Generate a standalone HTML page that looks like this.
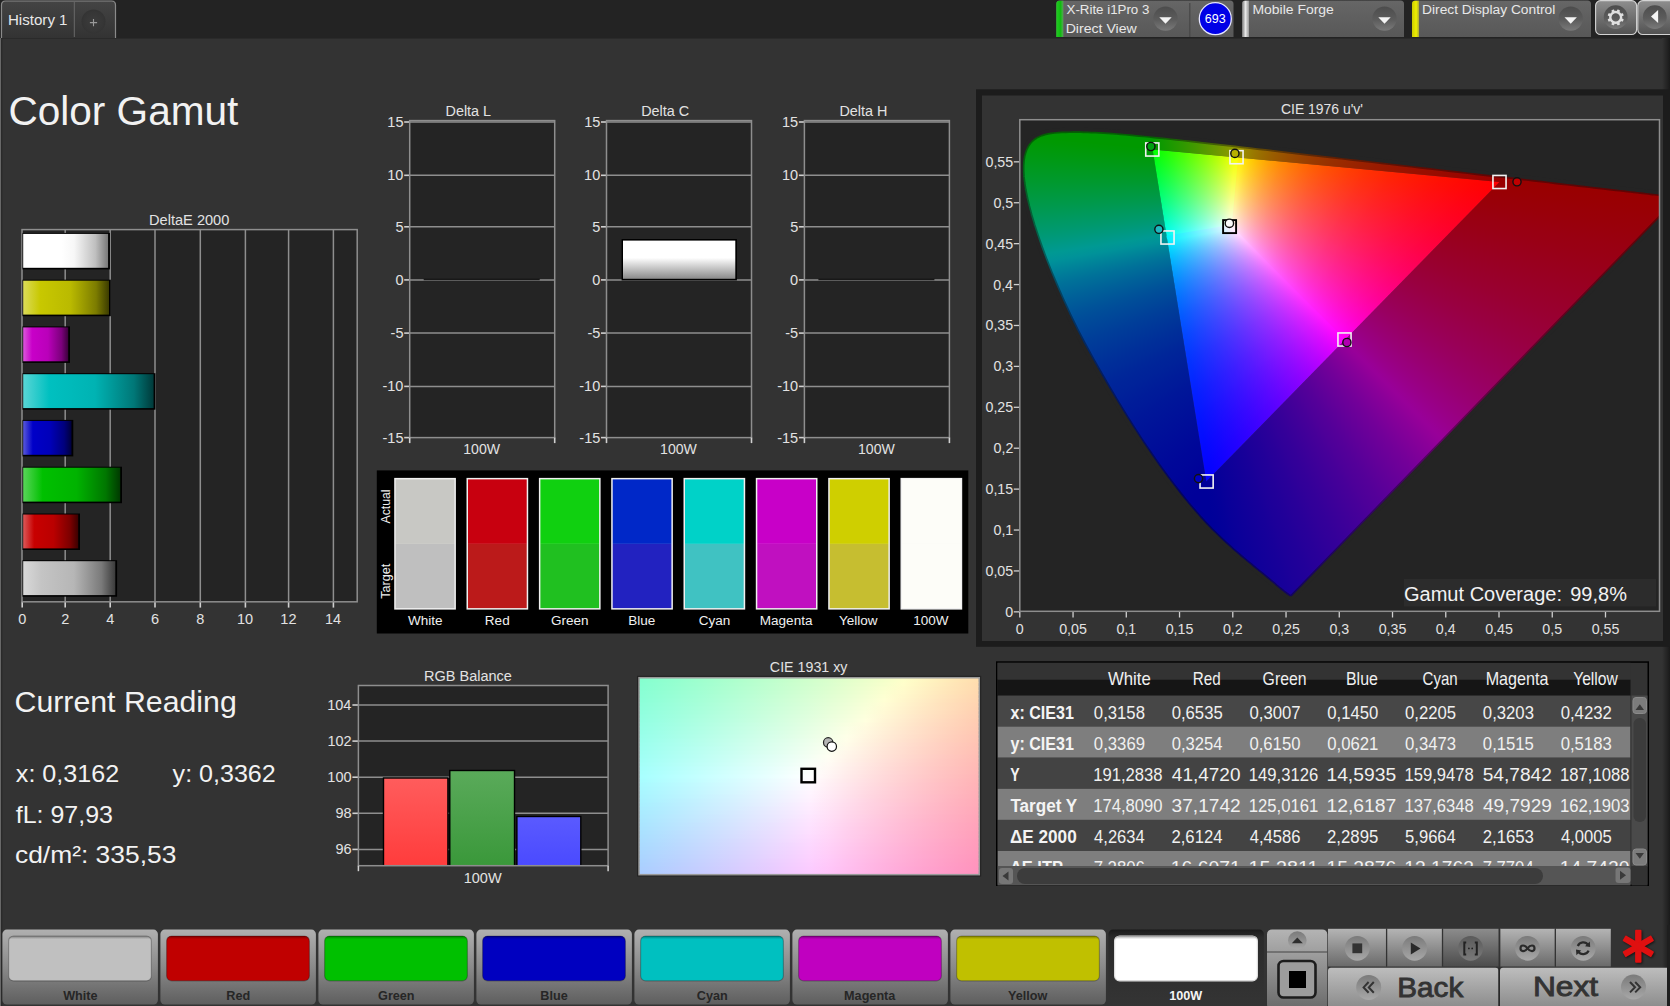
<!DOCTYPE html>
<html><head><meta charset="utf-8"><style>
html,body{margin:0;padding:0;background:#333;}
body{width:1670px;height:1006px;position:relative;overflow:hidden;font-family:"Liberation Sans",sans-serif;}
svg{position:absolute;left:0;top:0;}
svg text{font-family:"Liberation Sans",sans-serif;}
</style></head><body>
<svg width="1670" height="1006" viewBox="0 0 1670 1006">
<rect x="0" y="0" width="1670" height="1006" fill="#333333"/>
<rect x="0" y="0" width="1670" height="38.5" fill="#232323"/>
<rect x="0" y="38" width="1.2" height="968" fill="#686868"/><rect x="1.2" y="38" width="1" height="968" fill="#262626"/>
<defs><linearGradient id="rstrip" x1="0" x2="1" y1="0" y2="0"><stop offset="0" stop-color="#333"/><stop offset="1" stop-color="#1a1a1a"/></linearGradient></defs>
<rect x="1662" y="38" width="8" height="968" fill="url(#rstrip)"/>
<defs><linearGradient id="tabg" x1="0" x2="0" y1="0" y2="1"><stop offset="0" stop-color="#444"/><stop offset="1" stop-color="#333"/></linearGradient><radialGradient id="plusg" cx="0.5" cy="0.5" r="0.5"><stop offset="0" stop-color="#3c3c3c"/><stop offset="0.8" stop-color="#363636"/><stop offset="1" stop-color="#333"/></radialGradient></defs>
<path d="M1.5 38 V5 Q1.5 1 5.5 1 H111.5 Q115.5 1 115.5 5 V38" fill="url(#tabg)" stroke="#8a8a8a" stroke-width="1.2"/>
<line x1="74.3" y1="1.5" x2="74.3" y2="37" stroke="#6a6a6a" stroke-width="1"/>
<text x="7.96" y="25.30" font-size="14.83" textLength="59.58" lengthAdjust="spacingAndGlyphs" fill="#e8e8e8">History 1</text>
<circle cx="93.5" cy="21.5" r="12" fill="url(#plusg)"/>
<path d="M93.5 19 V26.2 M89.9 22.6 H97.1" stroke="#9a9a9a" stroke-width="1.1"/>
<defs><linearGradient id="selg" x1="0" x2="0" y1="0" y2="1"><stop offset="0" stop-color="#666"/><stop offset="1" stop-color="#585858"/></linearGradient><linearGradient id="ddg" x1="0" x2="0" y1="0" y2="1"><stop offset="0" stop-color="#4c4c4c"/><stop offset="0.55" stop-color="#5c5c5c"/><stop offset="1" stop-color="#7a7a7a"/></linearGradient><linearGradient id="greens" x1="0" x2="1"><stop offset="0" stop-color="#2c2"/><stop offset="0.6" stop-color="#1b1"/><stop offset="1" stop-color="#5a5"/></linearGradient><linearGradient id="whites" x1="0" x2="1"><stop offset="0" stop-color="#777"/><stop offset="0.5" stop-color="#e8e8e8"/><stop offset="1" stop-color="#999"/></linearGradient><linearGradient id="yellows" x1="0" x2="1"><stop offset="0" stop-color="#cc0"/><stop offset="0.6" stop-color="#ee0"/><stop offset="1" stop-color="#aa3"/></linearGradient></defs>
<path d="M1056.3 37 V4 Q1056.3 0.5 1059.8 0.5 H1230.0 Q1233.5 0.5 1233.5 4 V37 Z" fill="url(#selg)"/>
<path d="M1056.3 37 V4 Q1056.3 0.8 1059.3 0.8 H1063.3 V37 Z" fill="url(#greens)"/>
<text x="1066.50" y="13.80" font-size="13.52" textLength="82.88" lengthAdjust="spacingAndGlyphs" fill="#e8e8e8">X-Rite i1Pro 3</text>
<text x="1065.65" y="32.60" font-size="13.52" textLength="71.12" lengthAdjust="spacingAndGlyphs" fill="#e8e8e8">Direct View</text>
<circle cx="1165.5" cy="18.6" r="12.2" fill="url(#ddg)"/>
<path d="M1159.3 17.3 L1171.7 17.3 L1165.5 23.8 Z" fill="#f4f4f4"/>
<line x1="1189.8" y1="3" x2="1189.8" y2="37" stroke="#474747" stroke-width="1.2"/>
<circle cx="1215.3" cy="18.7" r="16" fill="#0000e6" stroke="#e6e6ff" stroke-width="1.3"/>
<text x="1204.83" y="23.20" font-size="12.50" fill="#ffffff">693</text>
<path d="M1242.0 37 V4 Q1242.0 0.5 1245.5 0.5 H1400.5 Q1404.0 0.5 1404.0 4 V37 Z" fill="url(#selg)"/>
<path d="M1242.0 37 V4 Q1242.0 0.8 1245.0 0.8 H1249.0 V37 Z" fill="url(#whites)"/>
<text x="1252.46" y="14.00" font-size="13.52" textLength="81.36" lengthAdjust="spacingAndGlyphs" fill="#e8e8e8">Mobile Forge</text>
<circle cx="1384.5" cy="18.6" r="12.2" fill="url(#ddg)"/>
<path d="M1378.3 17.3 L1390.7 17.3 L1384.5 23.8 Z" fill="#f4f4f4"/>
<path d="M1412.0 37 V4 Q1412.0 0.5 1415.5 0.5 H1587.5 Q1591.0 0.5 1591.0 4 V37 Z" fill="url(#selg)"/>
<path d="M1412.0 37 V4 Q1412.0 0.8 1415.0 0.8 H1419.0 V37 Z" fill="url(#yellows)"/>
<text x="1422.07" y="14.00" font-size="13.52" textLength="133.25" lengthAdjust="spacingAndGlyphs" fill="#e8e8e8">Direct Display Control</text>
<circle cx="1570.7" cy="18.6" r="12.2" fill="url(#ddg)"/>
<path d="M1564.5 17.3 L1576.9 17.3 L1570.7 23.8 Z" fill="#f4f4f4"/>
<defs><linearGradient id="btng" x1="0" x2="0" y1="0" y2="1"><stop offset="0" stop-color="#8e8e8e"/><stop offset="1" stop-color="#525252"/></linearGradient></defs>
<rect x="1595.6" y="0.6" width="41" height="33.9" rx="5" fill="url(#btng)" stroke="#d4d4d4" stroke-width="1.1"/>
<rect x="1637.8" y="0.6" width="40" height="33.9" rx="5" fill="url(#btng)" stroke="#d4d4d4" stroke-width="1.1"/>
<circle cx="1615.7" cy="17.2" r="11.9" fill="url(#ddg)"/>
<circle cx="1654.8" cy="17.2" r="11.9" fill="url(#ddg)"/>
<rect x="-1.4" y="-8.2" width="2.8" height="3.6" rx="0.6" transform="translate(1615.7 17.4) rotate(22.5)" fill="#e0e0e0"/><rect x="-1.4" y="-8.2" width="2.8" height="3.6" rx="0.6" transform="translate(1615.7 17.4) rotate(67.5)" fill="#e0e0e0"/><rect x="-1.4" y="-8.2" width="2.8" height="3.6" rx="0.6" transform="translate(1615.7 17.4) rotate(112.5)" fill="#e0e0e0"/><rect x="-1.4" y="-8.2" width="2.8" height="3.6" rx="0.6" transform="translate(1615.7 17.4) rotate(157.5)" fill="#e0e0e0"/><rect x="-1.4" y="-8.2" width="2.8" height="3.6" rx="0.6" transform="translate(1615.7 17.4) rotate(202.5)" fill="#e0e0e0"/><rect x="-1.4" y="-8.2" width="2.8" height="3.6" rx="0.6" transform="translate(1615.7 17.4) rotate(247.5)" fill="#e0e0e0"/><rect x="-1.4" y="-8.2" width="2.8" height="3.6" rx="0.6" transform="translate(1615.7 17.4) rotate(292.5)" fill="#e0e0e0"/><rect x="-1.4" y="-8.2" width="2.8" height="3.6" rx="0.6" transform="translate(1615.7 17.4) rotate(337.5)" fill="#e0e0e0"/>
<circle cx="1615.7" cy="17.4" r="5.4" fill="none" stroke="#e0e0e0" stroke-width="2.4"/>
<path d="M1651 16.6 L1658.1 10 V23 Z" fill="#f4f4f4"/>
<text x="8.44" y="125.10" font-size="40.70" textLength="229.86" lengthAdjust="spacingAndGlyphs" fill="#f2f2f2">Color Gamut</text>
<rect x="22.0" y="229.6" width="335.2" height="372.2" fill="#242424"/>
<line x1="22.20" y1="601.8" x2="22.20" y2="607.6" stroke="#d0d0d0" stroke-width="1.6"/>
<text x="18.16" y="624.20" font-size="14.53" fill="#e2e2e2">0</text>
<line x1="65.20" y1="229.6" x2="65.20" y2="601.8" stroke="#8e8e8e" stroke-width="1.5"/>
<line x1="65.20" y1="601.8" x2="65.20" y2="607.6" stroke="#d0d0d0" stroke-width="1.6"/>
<text x="61.16" y="624.20" font-size="14.53" fill="#e2e2e2">2</text>
<line x1="110.20" y1="229.6" x2="110.20" y2="601.8" stroke="#8e8e8e" stroke-width="1.5"/>
<line x1="110.20" y1="601.8" x2="110.20" y2="607.6" stroke="#d0d0d0" stroke-width="1.6"/>
<text x="106.20" y="624.20" font-size="14.53" fill="#e2e2e2">4</text>
<line x1="155.00" y1="229.6" x2="155.00" y2="601.8" stroke="#8e8e8e" stroke-width="1.5"/>
<line x1="155.00" y1="601.8" x2="155.00" y2="607.6" stroke="#d0d0d0" stroke-width="1.6"/>
<text x="150.91" y="624.20" font-size="14.53" fill="#e2e2e2">6</text>
<line x1="200.30" y1="229.6" x2="200.30" y2="601.8" stroke="#8e8e8e" stroke-width="1.5"/>
<line x1="200.30" y1="601.8" x2="200.30" y2="607.6" stroke="#d0d0d0" stroke-width="1.6"/>
<text x="196.26" y="624.20" font-size="14.53" fill="#e2e2e2">8</text>
<line x1="245.40" y1="229.6" x2="245.40" y2="601.8" stroke="#8e8e8e" stroke-width="1.5"/>
<line x1="245.40" y1="601.8" x2="245.40" y2="607.6" stroke="#d0d0d0" stroke-width="1.6"/>
<text x="237.05" y="624.20" font-size="14.53" fill="#e2e2e2">10</text>
<line x1="288.60" y1="229.6" x2="288.60" y2="601.8" stroke="#8e8e8e" stroke-width="1.5"/>
<line x1="288.60" y1="601.8" x2="288.60" y2="607.6" stroke="#d0d0d0" stroke-width="1.6"/>
<text x="280.33" y="624.20" font-size="14.53" fill="#e2e2e2">12</text>
<line x1="333.40" y1="229.6" x2="333.40" y2="601.8" stroke="#8e8e8e" stroke-width="1.5"/>
<line x1="333.40" y1="601.8" x2="333.40" y2="607.6" stroke="#d0d0d0" stroke-width="1.6"/>
<text x="324.98" y="624.20" font-size="14.53" fill="#e2e2e2">14</text>
<rect x="22.0" y="229.6" width="335.2" height="372.2" fill="none" stroke="#8e8e8e" stroke-width="1.5"/>
<text x="149.00" y="224.80" font-size="14.24" textLength="80.37" lengthAdjust="spacingAndGlyphs" fill="#e2e2e2">DeltaE 2000</text>
<defs><linearGradient id="dbar0" x1="0" x2="1"><stop offset="0.00" stop-color="#ffffff"/><stop offset="0.45" stop-color="#ffffff"/><stop offset="0.60" stop-color="#f7f7f7"/><stop offset="0.85" stop-color="#bfbfbf"/><stop offset="1.00" stop-color="#787878"/></linearGradient><linearGradient id="dbar1" x1="0" x2="1"><stop offset="0.00" stop-color="#dbdb59"/><stop offset="0.20" stop-color="#c8c800"/><stop offset="0.55" stop-color="#baba00"/><stop offset="0.85" stop-color="#7c7c00"/><stop offset="1.00" stop-color="#3c3c00"/></linearGradient><linearGradient id="dbar2" x1="0" x2="1"><stop offset="0.00" stop-color="#db59db"/><stop offset="0.20" stop-color="#c800c8"/><stop offset="0.55" stop-color="#ba00ba"/><stop offset="0.85" stop-color="#7c007c"/><stop offset="1.00" stop-color="#3c003c"/></linearGradient><linearGradient id="dbar3" x1="0" x2="1"><stop offset="0.00" stop-color="#59d6d6"/><stop offset="0.20" stop-color="#00c0c0"/><stop offset="0.55" stop-color="#00b3b3"/><stop offset="0.85" stop-color="#007777"/><stop offset="1.00" stop-color="#003a3a"/></linearGradient><linearGradient id="dbar4" x1="0" x2="1"><stop offset="0.00" stop-color="#5959db"/><stop offset="0.20" stop-color="#0000c8"/><stop offset="0.55" stop-color="#0000ba"/><stop offset="0.85" stop-color="#00007c"/><stop offset="1.00" stop-color="#00003c"/></linearGradient><linearGradient id="dbar5" x1="0" x2="1"><stop offset="0.00" stop-color="#59d659"/><stop offset="0.20" stop-color="#00c000"/><stop offset="0.55" stop-color="#00b300"/><stop offset="0.85" stop-color="#007700"/><stop offset="1.00" stop-color="#003a00"/></linearGradient><linearGradient id="dbar6" x1="0" x2="1"><stop offset="0.00" stop-color="#db5959"/><stop offset="0.20" stop-color="#c80000"/><stop offset="0.55" stop-color="#ba0000"/><stop offset="0.85" stop-color="#7c0000"/><stop offset="1.00" stop-color="#3c0000"/></linearGradient><linearGradient id="dbar7" x1="0" x2="1"><stop offset="0.00" stop-color="#d9d9d9"/><stop offset="0.20" stop-color="#c4c4c4"/><stop offset="0.55" stop-color="#b6b6b6"/><stop offset="0.85" stop-color="#7a7a7a"/><stop offset="1.00" stop-color="#3b3b3b"/></linearGradient></defs>
<rect x="22.5" y="232.9" width="87.4" height="36.5" fill="black"/>
<rect x="23.2" y="233.9" width="84.9" height="33.9" fill="url(#dbar0)"/>
<rect x="22.5" y="279.7" width="88.3" height="36.5" fill="black"/>
<rect x="23.2" y="280.7" width="85.8" height="33.9" fill="url(#dbar1)"/>
<rect x="22.5" y="326.4" width="47.5" height="36.5" fill="black"/>
<rect x="23.2" y="327.4" width="45.0" height="33.9" fill="url(#dbar2)"/>
<rect x="22.5" y="373.2" width="132.9" height="36.5" fill="black"/>
<rect x="23.2" y="374.2" width="130.4" height="33.9" fill="url(#dbar3)"/>
<rect x="22.5" y="419.9" width="50.8" height="36.5" fill="black"/>
<rect x="23.2" y="420.9" width="48.3" height="33.9" fill="url(#dbar4)"/>
<rect x="22.5" y="466.7" width="99.5" height="36.5" fill="black"/>
<rect x="23.2" y="467.7" width="97.0" height="33.9" fill="url(#dbar5)"/>
<rect x="22.5" y="513.5" width="57.5" height="36.5" fill="black"/>
<rect x="23.2" y="514.5" width="55.0" height="33.9" fill="url(#dbar6)"/>
<rect x="22.5" y="560.2" width="94.6" height="36.5" fill="black"/>
<rect x="23.2" y="561.2" width="92.1" height="33.9" fill="url(#dbar7)"/>
<rect x="409.7" y="120.6" width="145" height="317.0" fill="#242424"/>
<line x1="409.7" y1="122.00" x2="554.7" y2="122.00" stroke="#8e8e8e" stroke-width="1.5"/>
<line x1="404.2" y1="122.00" x2="409.7" y2="122.00" stroke="#d0d0d0" stroke-width="1.6"/>
<text x="387.34" y="127.00" font-size="14.53" fill="#e2e2e2">15</text>
<line x1="409.7" y1="175.30" x2="554.7" y2="175.30" stroke="#8e8e8e" stroke-width="1.5"/>
<line x1="404.2" y1="175.30" x2="409.7" y2="175.30" stroke="#d0d0d0" stroke-width="1.6"/>
<text x="387.30" y="180.30" font-size="14.53" fill="#e2e2e2">10</text>
<line x1="409.7" y1="226.80" x2="554.7" y2="226.80" stroke="#8e8e8e" stroke-width="1.5"/>
<line x1="404.2" y1="226.80" x2="409.7" y2="226.80" stroke="#d0d0d0" stroke-width="1.6"/>
<text x="395.43" y="231.80" font-size="14.53" fill="#e2e2e2">5</text>
<line x1="409.7" y1="279.90" x2="554.7" y2="279.90" stroke="#8e8e8e" stroke-width="1.5"/>
<line x1="404.2" y1="279.90" x2="409.7" y2="279.90" stroke="#d0d0d0" stroke-width="1.6"/>
<text x="395.38" y="284.90" font-size="14.53" fill="#e2e2e2">0</text>
<line x1="409.7" y1="333.10" x2="554.7" y2="333.10" stroke="#8e8e8e" stroke-width="1.5"/>
<line x1="404.2" y1="333.10" x2="409.7" y2="333.10" stroke="#d0d0d0" stroke-width="1.6"/>
<text x="390.59" y="338.10" font-size="14.53" fill="#e2e2e2">-5</text>
<line x1="409.7" y1="386.40" x2="554.7" y2="386.40" stroke="#8e8e8e" stroke-width="1.5"/>
<line x1="404.2" y1="386.40" x2="409.7" y2="386.40" stroke="#d0d0d0" stroke-width="1.6"/>
<text x="382.46" y="391.40" font-size="14.53" fill="#e2e2e2">-10</text>
<line x1="404.2" y1="437.60" x2="409.7" y2="437.60" stroke="#d0d0d0" stroke-width="1.6"/>
<text x="382.50" y="442.60" font-size="14.53" fill="#e2e2e2">-15</text>
<rect x="409.7" y="120.6" width="145" height="317.0" fill="none" stroke="#8e8e8e" stroke-width="1.5"/>
<line x1="409.7" y1="437.60" x2="409.7" y2="443.10" stroke="#d0d0d0" stroke-width="1.6"/>
<line x1="554.7" y1="437.60" x2="554.7" y2="443.10" stroke="#d0d0d0" stroke-width="1.6"/>
<text x="445.55" y="116.00" font-size="14.39" fill="#e2e2e2">Delta L</text>
<text x="463.27" y="453.80" font-size="14.10" fill="#e2e2e2">100W</text>
<line x1="423.7" y1="279.35" x2="539.7" y2="279.35" stroke="#181818" stroke-width="1.6"/>
<rect x="606.5" y="120.6" width="145" height="317.0" fill="#242424"/>
<line x1="606.5" y1="122.00" x2="751.5" y2="122.00" stroke="#8e8e8e" stroke-width="1.5"/>
<line x1="601.0" y1="122.00" x2="606.5" y2="122.00" stroke="#d0d0d0" stroke-width="1.6"/>
<text x="584.14" y="127.00" font-size="14.53" fill="#e2e2e2">15</text>
<line x1="606.5" y1="175.30" x2="751.5" y2="175.30" stroke="#8e8e8e" stroke-width="1.5"/>
<line x1="601.0" y1="175.30" x2="606.5" y2="175.30" stroke="#d0d0d0" stroke-width="1.6"/>
<text x="584.10" y="180.30" font-size="14.53" fill="#e2e2e2">10</text>
<line x1="606.5" y1="226.80" x2="751.5" y2="226.80" stroke="#8e8e8e" stroke-width="1.5"/>
<line x1="601.0" y1="226.80" x2="606.5" y2="226.80" stroke="#d0d0d0" stroke-width="1.6"/>
<text x="592.23" y="231.80" font-size="14.53" fill="#e2e2e2">5</text>
<line x1="606.5" y1="279.90" x2="751.5" y2="279.90" stroke="#8e8e8e" stroke-width="1.5"/>
<line x1="601.0" y1="279.90" x2="606.5" y2="279.90" stroke="#d0d0d0" stroke-width="1.6"/>
<text x="592.18" y="284.90" font-size="14.53" fill="#e2e2e2">0</text>
<line x1="606.5" y1="333.10" x2="751.5" y2="333.10" stroke="#8e8e8e" stroke-width="1.5"/>
<line x1="601.0" y1="333.10" x2="606.5" y2="333.10" stroke="#d0d0d0" stroke-width="1.6"/>
<text x="587.39" y="338.10" font-size="14.53" fill="#e2e2e2">-5</text>
<line x1="606.5" y1="386.40" x2="751.5" y2="386.40" stroke="#8e8e8e" stroke-width="1.5"/>
<line x1="601.0" y1="386.40" x2="606.5" y2="386.40" stroke="#d0d0d0" stroke-width="1.6"/>
<text x="579.26" y="391.40" font-size="14.53" fill="#e2e2e2">-10</text>
<line x1="601.0" y1="437.60" x2="606.5" y2="437.60" stroke="#d0d0d0" stroke-width="1.6"/>
<text x="579.30" y="442.60" font-size="14.53" fill="#e2e2e2">-15</text>
<rect x="606.5" y="120.6" width="145" height="317.0" fill="none" stroke="#8e8e8e" stroke-width="1.5"/>
<line x1="606.5" y1="437.60" x2="606.5" y2="443.10" stroke="#d0d0d0" stroke-width="1.6"/>
<line x1="751.5" y1="437.60" x2="751.5" y2="443.10" stroke="#d0d0d0" stroke-width="1.6"/>
<text x="641.19" y="116.00" font-size="14.39" fill="#e2e2e2">Delta C</text>
<text x="660.07" y="453.80" font-size="14.10" fill="#e2e2e2">100W</text>
<rect x="804.4" y="120.6" width="145" height="317.0" fill="#242424"/>
<line x1="804.4" y1="122.00" x2="949.4" y2="122.00" stroke="#8e8e8e" stroke-width="1.5"/>
<line x1="798.9" y1="122.00" x2="804.4" y2="122.00" stroke="#d0d0d0" stroke-width="1.6"/>
<text x="782.04" y="127.00" font-size="14.53" fill="#e2e2e2">15</text>
<line x1="804.4" y1="175.30" x2="949.4" y2="175.30" stroke="#8e8e8e" stroke-width="1.5"/>
<line x1="798.9" y1="175.30" x2="804.4" y2="175.30" stroke="#d0d0d0" stroke-width="1.6"/>
<text x="782.00" y="180.30" font-size="14.53" fill="#e2e2e2">10</text>
<line x1="804.4" y1="226.80" x2="949.4" y2="226.80" stroke="#8e8e8e" stroke-width="1.5"/>
<line x1="798.9" y1="226.80" x2="804.4" y2="226.80" stroke="#d0d0d0" stroke-width="1.6"/>
<text x="790.13" y="231.80" font-size="14.53" fill="#e2e2e2">5</text>
<line x1="804.4" y1="279.90" x2="949.4" y2="279.90" stroke="#8e8e8e" stroke-width="1.5"/>
<line x1="798.9" y1="279.90" x2="804.4" y2="279.90" stroke="#d0d0d0" stroke-width="1.6"/>
<text x="790.08" y="284.90" font-size="14.53" fill="#e2e2e2">0</text>
<line x1="804.4" y1="333.10" x2="949.4" y2="333.10" stroke="#8e8e8e" stroke-width="1.5"/>
<line x1="798.9" y1="333.10" x2="804.4" y2="333.10" stroke="#d0d0d0" stroke-width="1.6"/>
<text x="785.29" y="338.10" font-size="14.53" fill="#e2e2e2">-5</text>
<line x1="804.4" y1="386.40" x2="949.4" y2="386.40" stroke="#8e8e8e" stroke-width="1.5"/>
<line x1="798.9" y1="386.40" x2="804.4" y2="386.40" stroke="#d0d0d0" stroke-width="1.6"/>
<text x="777.16" y="391.40" font-size="14.53" fill="#e2e2e2">-10</text>
<line x1="798.9" y1="437.60" x2="804.4" y2="437.60" stroke="#d0d0d0" stroke-width="1.6"/>
<text x="777.20" y="442.60" font-size="14.53" fill="#e2e2e2">-15</text>
<rect x="804.4" y="120.6" width="145" height="317.0" fill="none" stroke="#8e8e8e" stroke-width="1.5"/>
<line x1="804.4" y1="437.60" x2="804.4" y2="443.10" stroke="#d0d0d0" stroke-width="1.6"/>
<line x1="949.4" y1="437.60" x2="949.4" y2="443.10" stroke="#d0d0d0" stroke-width="1.6"/>
<text x="839.41" y="116.00" font-size="14.39" fill="#e2e2e2">Delta H</text>
<text x="857.97" y="453.80" font-size="14.10" fill="#e2e2e2">100W</text>
<line x1="818.4" y1="279.35" x2="934.4" y2="279.35" stroke="#181818" stroke-width="1.6"/>
<defs><linearGradient id="cbar" x1="0" x2="0" y1="0" y2="1"><stop offset="0" stop-color="#fff"/><stop offset="0.45" stop-color="#fff"/><stop offset="1" stop-color="#8a8a8a"/></linearGradient></defs>
<rect x="621.6" y="239.0" width="115.3" height="41.4" fill="#000"/>
<rect x="623.0" y="240.6" width="112.3" height="38.2" fill="url(#cbar)"/>
<rect x="376.8" y="470.4" width="591.5" height="163.1" fill="#000"/>
<rect x="394.2" y="477.9" width="61.7" height="131.7" fill="#f0f0f0"/>
<rect x="395.7" y="479.4" width="58.7" height="64.5" fill="#c8c8c4"/>
<rect x="395.7" y="543.9" width="58.7" height="64.2" fill="#bfbfbf"/>
<text x="408.04" y="624.60" font-size="13.52" fill="#f0f0f0">White</text>
<rect x="466.5" y="477.9" width="61.7" height="131.7" fill="#f0f0f0"/>
<rect x="468.0" y="479.4" width="58.7" height="64.5" fill="#c8000f"/>
<rect x="468.0" y="543.9" width="58.7" height="64.2" fill="#bb1a1a"/>
<text x="484.86" y="624.60" font-size="13.52" fill="#f0f0f0">Red</text>
<rect x="538.9" y="477.9" width="61.7" height="131.7" fill="#f0f0f0"/>
<rect x="540.4" y="479.4" width="58.7" height="64.5" fill="#10d010"/>
<rect x="540.4" y="543.9" width="58.7" height="64.2" fill="#20c020"/>
<text x="551.02" y="624.60" font-size="13.52" fill="#f0f0f0">Green</text>
<rect x="611.2" y="477.9" width="61.7" height="131.7" fill="#f0f0f0"/>
<rect x="612.7" y="479.4" width="58.7" height="64.5" fill="#0028c8"/>
<rect x="612.7" y="543.9" width="58.7" height="64.2" fill="#2222c0"/>
<text x="628.26" y="624.60" font-size="13.52" fill="#f0f0f0">Blue</text>
<rect x="683.5" y="477.9" width="61.7" height="131.7" fill="#f0f0f0"/>
<rect x="685.0" y="479.4" width="58.7" height="64.5" fill="#00d2c8"/>
<rect x="685.0" y="543.9" width="58.7" height="64.2" fill="#40c2c2"/>
<text x="698.69" y="624.60" font-size="13.52" fill="#f0f0f0">Cyan</text>
<rect x="755.8" y="477.9" width="61.7" height="131.7" fill="#f0f0f0"/>
<rect x="757.3" y="479.4" width="58.7" height="64.5" fill="#c800c8"/>
<rect x="757.3" y="543.9" width="58.7" height="64.2" fill="#c010c0"/>
<text x="759.84" y="624.60" font-size="13.52" fill="#f0f0f0">Magenta</text>
<rect x="828.2" y="477.9" width="61.7" height="131.7" fill="#f0f0f0"/>
<rect x="829.7" y="479.4" width="58.7" height="64.5" fill="#cfcf00"/>
<rect x="829.7" y="543.9" width="58.7" height="64.2" fill="#c6be30"/>
<text x="838.96" y="624.60" font-size="13.52" fill="#f0f0f0">Yellow</text>
<rect x="900.5" y="477.9" width="61.7" height="131.7" fill="#f0f0f0"/>
<rect x="902.0" y="479.4" width="58.7" height="64.5" fill="#fdfdf8"/>
<rect x="902.0" y="543.9" width="58.7" height="64.2" fill="#fdfdf8"/>
<text x="913.21" y="624.60" font-size="13.52" fill="#f0f0f0">100W</text>
<text transform="translate(390.2 506.5) rotate(-90)" font-size="13.2" fill="#f0f0f0" text-anchor="middle" textLength="34" lengthAdjust="spacingAndGlyphs">Actual</text>
<text transform="translate(390.2 581.2) rotate(-90)" font-size="13.2" fill="#f0f0f0" text-anchor="middle" textLength="35" lengthAdjust="spacingAndGlyphs">Target</text>
<rect x="976" y="89.3" width="694" height="557.5" fill="#1c1c1c"/>
<rect x="982" y="95.5" width="681" height="545.5" fill="#333333"/>
<rect x="1019.8" y="119.7" width="639.7" height="491.6" fill="#242424"/>
</svg>
<div style="position:absolute;left:1020px;top:120px;width:640px;height:492px;overflow:hidden;clip-path:path('M273.0 477.5 L273.0 477.5 L272.9 477.5 L272.9 477.5 L272.8 477.5 L272.8 477.5 L272.7 477.6 L272.7 477.7 L272.6 477.8 L272.5 477.8 L272.4 477.8 L272.3 477.7 L272.2 477.8 L272.1 477.8 L272.0 477.9 L271.9 478.0 L271.8 478.0 L271.7 478.0 L271.6 478.0 L271.4 478.0 L271.3 478.0 L271.1 478.0 L271.0 478.0 L270.8 478.0 L270.6 478.0 L270.4 478.0 L270.2 478.1 L270.0 478.1 L269.7 478.0 L269.4 477.9 L269.0 477.8 L268.6 477.5 L268.1 477.2 L267.5 476.9 L266.9 476.5 L266.1 476.0 L265.3 475.4 L264.5 474.8 L263.6 474.1 L262.7 473.4 L261.6 472.5 L260.4 471.6 L259.1 470.5 L257.7 469.4 L256.2 468.2 L254.7 466.8 L253.0 465.4 L251.3 463.9 L249.4 462.4 L247.5 460.7 L245.4 459.0 L243.2 457.2 L240.9 455.3 L238.3 453.1 L235.5 450.9 L232.6 448.5 L229.6 446.0 L226.5 443.4 L223.2 440.7 L219.7 437.8 L216.1 434.7 L212.2 431.3 L208.1 427.7 L203.9 423.8 L199.4 419.6 L194.8 415.2 L190.1 410.5 L185.0 405.3 L179.4 399.2 L173.4 392.3 L166.9 384.7 L160.1 376.3 L152.9 367.2 L145.5 357.3 L137.8 346.7 L129.8 335.4 L121.6 323.4 L113.3 310.6 L104.8 297.0 L96.2 283.0 L87.7 268.8 L79.3 254.3 L70.8 239.5 L62.7 224.5 L55.0 209.9 L47.9 195.3 L41.3 180.8 L35.1 166.7 L29.5 153.2 L24.4 140.4 L19.8 128.0 L15.7 116.4 L12.2 105.5 L9.2 95.5 L6.7 86.3 L4.8 77.9 L3.2 70.0 L2.0 62.9 L1.3 56.5 L1.0 50.7 L1.0 45.3 L1.4 40.4 L2.1 36.0 L3.1 32.0 L4.4 28.4 L6.1 25.1 L8.0 22.3 L10.2 19.8 L12.6 17.6 L15.2 15.8 L18.0 14.3 L21.0 13.1 L24.1 12.1 L27.4 11.3 L30.8 10.8 L34.3 10.4 L37.8 10.1 L41.5 9.8 L45.2 9.7 L49.0 9.6 L52.8 9.6 L56.6 9.5 L60.4 9.6 L64.2 9.6 L68.0 9.7 L71.9 9.9 L75.8 10.0 L79.8 10.3 L83.9 10.5 L88.0 10.7 L92.2 11.0 L96.6 11.4 L101.0 11.7 L105.5 12.1 L110.0 12.5 L114.7 12.9 L119.5 13.4 L124.4 13.9 L129.5 14.4 L134.6 14.9 L139.9 15.5 L145.4 16.0 L151.0 16.6 L156.7 17.2 L162.6 17.9 L168.6 18.6 L174.7 19.2 L181.1 20.0 L187.6 20.7 L194.2 21.4 L201.1 22.2 L208.1 23.0 L215.3 23.8 L222.6 24.7 L230.1 25.5 L237.8 26.4 L245.7 27.3 L253.7 28.2 L262.0 29.2 L270.3 30.2 L278.9 31.1 L287.6 32.2 L296.5 33.2 L305.5 34.2 L314.7 35.3 L324.0 36.3 L333.4 37.4 L343.0 38.5 L352.6 39.6 L362.3 40.7 L372.0 41.9 L381.8 43.0 L391.5 44.1 L401.0 45.2 L410.5 46.3 L419.9 47.4 L429.2 48.5 L438.5 49.5 L447.8 50.6 L457.0 51.7 L465.9 52.7 L474.6 53.7 L483.0 54.6 L491.2 55.6 L499.2 56.5 L506.9 57.4 L514.4 58.2 L521.6 59.1 L528.6 59.9 L535.2 60.7 L541.6 61.4 L547.7 62.1 L553.6 62.8 L559.2 63.4 L564.5 64.0 L569.6 64.6 L574.5 65.2 L579.2 65.7 L583.7 66.2 L588.0 66.7 L592.2 67.2 L596.2 67.7 L600.1 68.1 L603.9 68.6 L607.5 69.0 L610.9 69.4 L614.3 69.8 L617.4 70.1 L620.4 70.5 L623.3 70.8 L626.0 71.1 L628.5 71.4 L630.9 71.7 L633.0 71.9 L634.9 72.1 L636.8 72.4 L639.0 72.6 L641.7 72.9 L644.7 73.3 L647.6 73.6 L650.1 73.9 L651.9 74.1 L653.3 74.3 L654.5 74.4 L655.7 74.5 L656.8 74.7 L657.8 74.8 L658.8 74.9 L659.7 75.0 L660.7 75.1 L661.8 75.2 L662.8 75.3 L663.4 75.4 Z')">
<div style="position:absolute;left:0;top:0;width:640px;height:492px;clip-path:polygon(0.0px 492.0px,0.0px 0.0px,127.9px 0.0px,207.5px 492.0px)">
<div style="position:absolute;left:0;top:0;width:640px;height:492px;background:conic-gradient(from 0deg at 479.5px 62.0px,#000099 0.0deg,#000099 224.0deg,#000199 225.0deg,#000299 226.0deg,#000499 227.0deg,#000699 228.0deg,#000799 229.0deg,#000999 230.0deg,#000b99 231.0deg,#000d99 232.0deg,#000f99 233.0deg,#001199 234.0deg,#001399 235.0deg,#001599 236.0deg,#001799 237.0deg,#001a99 238.0deg,#001c99 239.0deg,#001f99 240.0deg,#002299 241.0deg,#002499 242.0deg,#002799 243.0deg,#002b99 244.0deg,#002e99 245.0deg,#003299 246.0deg,#003699 247.0deg,#003a99 248.0deg,#003e99 249.0deg,#004399 250.0deg,#004899 251.0deg,#004d99 252.0deg,#005399 253.0deg,#005a99 254.0deg,#006199 255.0deg,#006999 256.0deg,#007199 257.0deg,#007b99 258.0deg,#008699 259.0deg,#009299 260.0deg,#009993 261.0deg,#009986 262.0deg,#009979 263.0deg,#00996d 264.0deg,#009962 265.0deg,#009957 266.0deg,#00994c 267.0deg,#009942 268.0deg,#009938 269.0deg,#00992e 270.0deg,#009925 271.0deg,#00991c 272.0deg,#009913 273.0deg,#00990b 274.0deg,#009903 275.0deg,#009900 276.0deg,#009900 360.0deg)"></div>
</div>
<div style="position:absolute;left:0;top:0;width:640px;height:492px;clip-path:polygon(640.0px 0.0px,640.0px 77.0px,0.0px 17.0px,0.0px 0.0px)">
<div style="position:absolute;left:0;top:0;width:640px;height:492px;background:conic-gradient(from 0deg at 186.3px 361.5px,#589900 0.0deg,#639900 1.0deg,#6e9900 2.0deg,#7b9900 3.0deg,#879900 4.0deg,#949900 5.0deg,#999100 6.0deg,#998500 7.0deg,#997a00 8.0deg,#997100 9.0deg,#996900 10.0deg,#996100 11.0deg,#995a00 12.0deg,#995400 13.0deg,#994e00 14.0deg,#994900 15.0deg,#994400 16.0deg,#994000 17.0deg,#993b00 18.0deg,#993700 19.0deg,#993400 20.0deg,#993000 21.0deg,#992d00 22.0deg,#992a00 23.0deg,#992700 24.0deg,#992400 25.0deg,#992100 26.0deg,#991f00 27.0deg,#991c00 28.0deg,#991a00 29.0deg,#991800 30.0deg,#991600 31.0deg,#991400 32.0deg,#991200 33.0deg,#991000 34.0deg,#990e00 35.0deg,#990d00 36.0deg,#990b00 37.0deg,#990900 38.0deg,#990800 39.0deg,#990600 40.0deg,#990500 41.0deg,#990300 42.0deg,#990200 43.0deg,#990100 44.0deg,#990000 45.0deg,#990000 194.0deg,#009900 195.0deg,#009900 350.0deg,#029900 351.0deg,#0a9900 352.0deg,#139900 353.0deg,#1c9900 354.0deg,#259900 355.0deg,#2e9900 356.0deg,#389900 357.0deg,#429900 358.0deg,#4d9900 359.0deg,#589900 360.0deg)"></div>
</div>
<div style="position:absolute;left:0;top:0;width:640px;height:492px;clip-path:polygon(640.0px 492.0px,640.0px 0.0px,540.1px 0.0px,58.6px 492.0px)">
<div style="position:absolute;left:0;top:0;width:640px;height:492px;background:conic-gradient(from 0deg at 132.6px 29.5px,#990000 0.0deg,#990000 95.0deg,#990002 96.0deg,#990004 97.0deg,#990007 98.0deg,#990009 99.0deg,#99000c 100.0deg,#99000f 101.0deg,#990012 102.0deg,#990014 103.0deg,#990017 104.0deg,#99001a 105.0deg,#99001d 106.0deg,#990020 107.0deg,#990023 108.0deg,#990026 109.0deg,#990029 110.0deg,#99002c 111.0deg,#99002f 112.0deg,#990032 113.0deg,#990036 114.0deg,#990039 115.0deg,#99003d 116.0deg,#990040 117.0deg,#990044 118.0deg,#990048 119.0deg,#99004c 120.0deg,#990050 121.0deg,#990054 122.0deg,#990058 123.0deg,#99005d 124.0deg,#990061 125.0deg,#990066 126.0deg,#99006b 127.0deg,#990070 128.0deg,#990075 129.0deg,#99007b 130.0deg,#990080 131.0deg,#990086 132.0deg,#99008c 133.0deg,#990093 134.0deg,#980099 135.0deg,#920099 136.0deg,#8b0099 137.0deg,#850099 138.0deg,#7f0099 139.0deg,#790099 140.0deg,#730099 141.0deg,#6e0099 142.0deg,#690099 143.0deg,#640099 144.0deg,#5f0099 145.0deg,#5a0099 146.0deg,#550099 147.0deg,#510099 148.0deg,#4d0099 149.0deg,#480099 150.0deg,#440099 151.0deg,#400099 152.0deg,#3c0099 153.0deg,#380099 154.0deg,#340099 155.0deg,#310099 156.0deg,#2d0099 157.0deg,#290099 158.0deg,#260099 159.0deg,#220099 160.0deg,#1f0099 161.0deg,#1c0099 162.0deg,#180099 163.0deg,#150099 164.0deg,#120099 165.0deg,#0f0099 166.0deg,#0c0099 167.0deg,#090099 168.0deg,#050099 169.0deg,#020099 170.0deg,#000099 171.0deg,#000099 360.0deg)"></div>
</div>
<div style="position:absolute;left:0;top:0;width:640px;height:492px;clip-path:polygon(479.5px 62.0px,132.6px 29.5px,186.3px 361.5px)">
<div style="position:absolute;left:0;top:0;width:640px;height:492px;clip-path:polygon(482.8px 60.8px,215.3px 35.7px,208.6px 107.3px,324.4px 222.6px);isolation:isolate">
<div style="position:absolute;left:0;top:0;width:640px;height:492px;background:conic-gradient(from 0deg at 186.3px 361.5px,#fff1ff 0.0deg,#fff1ff 6.0deg,#ffddff 7.0deg,#ffccff 8.0deg,#ffbdff 9.0deg,#ffafff 10.0deg,#ffa2ff 11.0deg,#ff97ff 12.0deg,#ff8cff 13.0deg,#ff83ff 14.0deg,#ff7aff 15.0deg,#ff72ff 16.0deg,#ff6aff 17.0deg,#ff63ff 18.0deg,#ff5cff 19.0deg,#ff56ff 20.0deg,#ff50ff 21.0deg,#ff4bff 22.0deg,#ff46ff 23.0deg,#ff41ff 24.0deg,#ff3cff 25.0deg,#ff38ff 26.0deg,#ff33ff 27.0deg,#ff2fff 28.0deg,#ff2cff 29.0deg,#ff28ff 30.0deg,#ff24ff 31.0deg,#ff21ff 32.0deg,#ff1eff 33.0deg,#ff1bff 34.0deg,#ff18ff 35.0deg,#ff15ff 36.0deg,#ff12ff 37.0deg,#ff0fff 38.0deg,#ff0dff 39.0deg,#ff0aff 40.0deg,#ff08ff 41.0deg,#ff05ff 42.0deg,#ff03ff 43.0deg,#ff01ff 44.0deg,#ff01ff 360.0deg)"></div>
<div style="position:absolute;left:0;top:0;width:640px;height:492px;background:conic-gradient(from 0deg at 132.6px 29.5px,#ffff03 0.0deg,#ffff03 96.0deg,#ffff07 97.0deg,#ffff0b 98.0deg,#ffff10 99.0deg,#ffff14 100.0deg,#ffff19 101.0deg,#ffff1d 102.0deg,#ffff22 103.0deg,#ffff26 104.0deg,#ffff2b 105.0deg,#ffff30 106.0deg,#ffff35 107.0deg,#ffff3a 108.0deg,#ffff3f 109.0deg,#ffff44 110.0deg,#ffff49 111.0deg,#ffff4f 112.0deg,#ffff54 113.0deg,#ffff5a 114.0deg,#ffff5f 115.0deg,#ffff65 116.0deg,#ffff6b 117.0deg,#ffff72 118.0deg,#ffff78 119.0deg,#ffff7e 120.0deg,#ffff85 121.0deg,#ffff8c 122.0deg,#ffff93 123.0deg,#ffff9a 124.0deg,#ffffa2 125.0deg,#ffffaa 126.0deg,#ffffb2 127.0deg,#ffffbb 128.0deg,#ffffc3 129.0deg,#ffffcc 130.0deg,#ffffd6 131.0deg,#ffffe0 132.0deg,#ffffea 133.0deg,#fffff5 134.0deg,#fffff5 360.0deg);mix-blend-mode:multiply"></div>
</div>
<div style="position:absolute;left:0;top:0;width:640px;height:492px;clip-path:polygon(130.8px 27.8px,145.6px 119.0px,211.6px 108.0px,218.3px 36.0px);isolation:isolate">
<div style="position:absolute;left:0;top:0;width:640px;height:492px;background:conic-gradient(from 0deg at 186.3px 361.5px,#92ffff 0.0deg,#a5ffff 1.0deg,#b8ffff 2.0deg,#ccffff 3.0deg,#e1ffff 4.0deg,#f7ffff 5.0deg,#f7ffff 178.0deg,#03ffff 179.0deg,#03ffff 351.0deg,#11ffff 352.0deg,#1fffff 353.0deg,#2effff 354.0deg,#3effff 355.0deg,#4dffff 356.0deg,#5effff 357.0deg,#6fffff 358.0deg,#80ffff 359.0deg,#92ffff 360.0deg)"></div>
<div style="position:absolute;left:0;top:0;width:640px;height:492px;background:conic-gradient(from 0deg at 479.5px 62.0px,#fffff5 0.0deg,#fffff5 261.0deg,#ffffdf 262.0deg,#ffffca 263.0deg,#ffffb6 264.0deg,#ffffa3 265.0deg,#ffff90 266.0deg,#ffff7e 267.0deg,#ffff6d 268.0deg,#ffff5d 269.0deg,#ffff4d 270.0deg,#ffff3e 271.0deg,#ffff2f 272.0deg,#ffff20 273.0deg,#ffff12 274.0deg,#ffff05 275.0deg,#ffff05 360.0deg);mix-blend-mode:multiply"></div>
</div>
<div style="position:absolute;left:0;top:0;width:640px;height:492px;clip-path:polygon(185.3px 364.7px,326.5px 220.5px,210.7px 105.1px,145.1px 116.0px);isolation:isolate">
<div style="position:absolute;left:0;top:0;width:640px;height:492px;background:conic-gradient(from 0deg at 132.6px 29.5px,#feffff 0.0deg,#feffff 135.0deg,#f3ffff 136.0deg,#e8ffff 137.0deg,#ddffff 138.0deg,#d3ffff 139.0deg,#caffff 140.0deg,#c0ffff 141.0deg,#b7ffff 142.0deg,#afffff 143.0deg,#a6ffff 144.0deg,#9effff 145.0deg,#96ffff 146.0deg,#8effff 147.0deg,#87ffff 148.0deg,#80ffff 149.0deg,#79ffff 150.0deg,#72ffff 151.0deg,#6bffff 152.0deg,#64ffff 153.0deg,#5effff 154.0deg,#57ffff 155.0deg,#51ffff 156.0deg,#4bffff 157.0deg,#45ffff 158.0deg,#3fffff 159.0deg,#39ffff 160.0deg,#34ffff 161.0deg,#2effff 162.0deg,#29ffff 163.0deg,#23ffff 164.0deg,#1effff 165.0deg,#19ffff 166.0deg,#13ffff 167.0deg,#0effff 168.0deg,#09ffff 169.0deg,#04ffff 170.0deg,#04ffff 360.0deg)"></div>
<div style="position:absolute;left:0;top:0;width:640px;height:492px;background:conic-gradient(from 0deg at 479.5px 62.0px,#ff02ff 0.0deg,#ff02ff 225.0deg,#ff04ff 226.0deg,#ff07ff 227.0deg,#ff09ff 228.0deg,#ff0cff 229.0deg,#ff0fff 230.0deg,#ff12ff 231.0deg,#ff15ff 232.0deg,#ff19ff 233.0deg,#ff1cff 234.0deg,#ff1fff 235.0deg,#ff23ff 236.0deg,#ff27ff 237.0deg,#ff2bff 238.0deg,#ff2fff 239.0deg,#ff33ff 240.0deg,#ff38ff 241.0deg,#ff3dff 242.0deg,#ff42ff 243.0deg,#ff47ff 244.0deg,#ff4dff 245.0deg,#ff53ff 246.0deg,#ff59ff 247.0deg,#ff60ff 248.0deg,#ff68ff 249.0deg,#ff6fff 250.0deg,#ff78ff 251.0deg,#ff81ff 252.0deg,#ff8bff 253.0deg,#ff96ff 254.0deg,#ffa2ff 255.0deg,#ffafff 256.0deg,#ffbdff 257.0deg,#ffcdff 258.0deg,#ffdfff 259.0deg,#fff3ff 260.0deg,#fff3ff 360.0deg);mix-blend-mode:multiply"></div>
</div>
</div>
</div>
<svg width="1670" height="1006" viewBox="0 0 1670 1006">
<text x="1280.94" y="114.20" font-size="13.95" fill="#e2e2e2">CIE 1976 u'v'</text>
<line x1="1013.8" y1="611.85" x2="1019.8" y2="611.85" stroke="#d0d0d0" stroke-width="1.3"/>
<text x="1005.23" y="616.85" font-size="14.24" fill="#e2e2e2">0</text>
<line x1="1019.80" y1="611.3" x2="1019.80" y2="617.5" stroke="#d0d0d0" stroke-width="1.3"/>
<text x="1015.84" y="633.50" font-size="14.24" fill="#e2e2e2">0</text>
<line x1="1013.8" y1="570.94" x2="1019.8" y2="570.94" stroke="#d0d0d0" stroke-width="1.3"/>
<text x="985.47" y="575.94" font-size="14.24" fill="#e2e2e2">0,05</text>
<line x1="1073.05" y1="611.3" x2="1073.05" y2="617.5" stroke="#d0d0d0" stroke-width="1.3"/>
<text x="1059.20" y="633.50" font-size="14.24" fill="#e2e2e2">0,05</text>
<line x1="1013.8" y1="530.03" x2="1019.8" y2="530.03" stroke="#d0d0d0" stroke-width="1.3"/>
<text x="993.49" y="535.03" font-size="14.24" fill="#e2e2e2">0,1</text>
<line x1="1126.29" y1="611.3" x2="1126.29" y2="617.5" stroke="#d0d0d0" stroke-width="1.3"/>
<text x="1116.46" y="633.50" font-size="14.24" fill="#e2e2e2">0,1</text>
<line x1="1013.8" y1="489.12" x2="1019.8" y2="489.12" stroke="#d0d0d0" stroke-width="1.3"/>
<text x="985.47" y="494.12" font-size="14.24" fill="#e2e2e2">0,15</text>
<line x1="1179.54" y1="611.3" x2="1179.54" y2="617.5" stroke="#d0d0d0" stroke-width="1.3"/>
<text x="1165.69" y="633.50" font-size="14.24" fill="#e2e2e2">0,15</text>
<line x1="1013.8" y1="448.21" x2="1019.8" y2="448.21" stroke="#d0d0d0" stroke-width="1.3"/>
<text x="993.52" y="453.21" font-size="14.24" fill="#e2e2e2">0,2</text>
<line x1="1232.78" y1="611.3" x2="1232.78" y2="617.5" stroke="#d0d0d0" stroke-width="1.3"/>
<text x="1222.96" y="633.50" font-size="14.24" fill="#e2e2e2">0,2</text>
<line x1="1013.8" y1="407.30" x2="1019.8" y2="407.30" stroke="#d0d0d0" stroke-width="1.3"/>
<text x="985.47" y="412.30" font-size="14.24" fill="#e2e2e2">0,25</text>
<line x1="1286.03" y1="611.3" x2="1286.03" y2="617.5" stroke="#d0d0d0" stroke-width="1.3"/>
<text x="1272.18" y="633.50" font-size="14.24" fill="#e2e2e2">0,25</text>
<line x1="1013.8" y1="366.39" x2="1019.8" y2="366.39" stroke="#d0d0d0" stroke-width="1.3"/>
<text x="993.42" y="371.39" font-size="14.24" fill="#e2e2e2">0,3</text>
<line x1="1339.27" y1="611.3" x2="1339.27" y2="617.5" stroke="#d0d0d0" stroke-width="1.3"/>
<text x="1329.40" y="633.50" font-size="14.24" fill="#e2e2e2">0,3</text>
<line x1="1013.8" y1="325.48" x2="1019.8" y2="325.48" stroke="#d0d0d0" stroke-width="1.3"/>
<text x="985.47" y="330.48" font-size="14.24" fill="#e2e2e2">0,35</text>
<line x1="1392.52" y1="611.3" x2="1392.52" y2="617.5" stroke="#d0d0d0" stroke-width="1.3"/>
<text x="1378.67" y="633.50" font-size="14.24" fill="#e2e2e2">0,35</text>
<line x1="1013.8" y1="284.57" x2="1019.8" y2="284.57" stroke="#d0d0d0" stroke-width="1.3"/>
<text x="993.22" y="289.57" font-size="14.24" fill="#e2e2e2">0,4</text>
<line x1="1445.76" y1="611.3" x2="1445.76" y2="617.5" stroke="#d0d0d0" stroke-width="1.3"/>
<text x="1435.79" y="633.50" font-size="14.24" fill="#e2e2e2">0,4</text>
<line x1="1013.8" y1="243.66" x2="1019.8" y2="243.66" stroke="#d0d0d0" stroke-width="1.3"/>
<text x="985.47" y="248.66" font-size="14.24" fill="#e2e2e2">0,45</text>
<line x1="1499.01" y1="611.3" x2="1499.01" y2="617.5" stroke="#d0d0d0" stroke-width="1.3"/>
<text x="1485.16" y="633.50" font-size="14.24" fill="#e2e2e2">0,45</text>
<line x1="1013.8" y1="202.75" x2="1019.8" y2="202.75" stroke="#d0d0d0" stroke-width="1.3"/>
<text x="993.40" y="207.75" font-size="14.24" fill="#e2e2e2">0,5</text>
<line x1="1552.25" y1="611.3" x2="1552.25" y2="617.5" stroke="#d0d0d0" stroke-width="1.3"/>
<text x="1542.37" y="633.50" font-size="14.24" fill="#e2e2e2">0,5</text>
<line x1="1013.8" y1="161.84" x2="1019.8" y2="161.84" stroke="#d0d0d0" stroke-width="1.3"/>
<text x="985.47" y="166.84" font-size="14.24" fill="#e2e2e2">0,55</text>
<line x1="1605.49" y1="611.3" x2="1605.49" y2="617.5" stroke="#d0d0d0" stroke-width="1.3"/>
<text x="1591.65" y="633.50" font-size="14.24" fill="#e2e2e2">0,55</text>
<rect x="1404" y="579" width="252" height="27.5" fill="#2d2d2d" opacity="0.95"/>
<text x="1403.99" y="600.70" font-size="19.91" textLength="158.04" lengthAdjust="spacingAndGlyphs" fill="#f2f2f2">Gamut Coverage:</text>
<text x="1570.26" y="600.70" font-size="19.91" textLength="56.65" lengthAdjust="spacingAndGlyphs" fill="#f2f2f2">99,8%</text>
<defs><clipPath id="plotclip"><rect x="1020.5" y="120.5" width="638.5" height="490"/></clipPath></defs>
<defs><clipPath id="hsclip"><path d="M1293.00 597.48 L1292.97 597.48 L1292.92 597.46 L1292.87 597.46 L1292.82 597.48 L1292.77 597.54 L1292.71 597.62 L1292.65 597.70 L1292.58 597.75 L1292.51 597.76 L1292.42 597.75 L1292.33 597.74 L1292.23 597.75 L1292.13 597.81 L1292.04 597.89 L1291.93 597.97 L1291.82 598.02 L1291.70 598.04 L1291.57 598.04 L1291.44 598.03 L1291.29 598.02 L1291.13 598.03 L1290.96 598.03 L1290.77 598.03 L1290.58 598.03 L1290.39 598.05 L1290.19 598.08 L1289.97 598.09 L1289.69 598.03 L1289.37 597.92 L1289.01 597.75 L1288.60 597.53 L1288.10 597.24 L1287.52 596.88 L1286.85 596.45 L1286.13 595.96 L1285.34 595.40 L1284.52 594.79 L1283.64 594.13 L1282.69 593.38 L1281.62 592.53 L1280.42 591.58 L1279.12 590.53 L1277.72 589.39 L1276.23 588.16 L1274.68 586.84 L1273.04 585.44 L1271.30 583.94 L1269.44 582.37 L1267.49 580.73 L1265.43 579.02 L1263.24 577.21 L1260.86 575.25 L1258.29 573.14 L1255.54 570.89 L1252.64 568.52 L1249.60 566.01 L1246.45 563.40 L1243.17 560.69 L1239.71 557.80 L1236.06 554.65 L1232.19 551.28 L1228.14 547.69 L1223.89 543.83 L1219.42 539.61 L1214.82 535.16 L1210.05 530.48 L1204.98 525.27 L1199.45 519.23 L1193.39 512.31 L1186.90 504.67 L1180.06 496.30 L1172.94 487.19 L1165.52 477.31 L1157.76 466.69 L1149.77 455.35 L1141.65 443.37 L1133.32 430.59 L1124.76 417.05 L1116.16 403.03 L1107.70 388.83 L1099.27 374.34 L1090.83 359.47 L1082.66 344.54 L1075.02 329.86 L1067.94 315.33 L1061.30 300.84 L1055.13 286.71 L1049.49 273.24 L1044.38 260.39 L1039.79 248.05 L1035.71 236.36 L1032.16 225.50 L1029.18 215.52 L1026.73 206.32 L1024.77 197.85 L1023.20 190.03 L1022.05 182.91 L1021.34 176.52 L1021.02 170.71 L1021.03 165.33 L1021.38 160.39 L1022.09 155.97 L1023.13 151.98 L1024.44 148.35 L1026.07 145.10 L1028.01 142.25 L1030.20 139.76 L1032.58 137.58 L1035.18 135.76 L1038.00 134.29 L1041.00 133.09 L1044.12 132.08 L1047.37 131.30 L1050.77 130.76 L1054.28 130.37 L1057.85 130.05 L1061.50 129.80 L1065.24 129.66 L1069.03 129.59 L1072.81 129.55 L1076.58 129.54 L1080.36 129.57 L1084.16 129.64 L1088.02 129.74 L1091.91 129.88 L1095.83 130.05 L1099.81 130.25 L1103.87 130.48 L1108.02 130.75 L1112.25 131.04 L1116.56 131.37 L1120.96 131.72 L1125.46 132.10 L1130.04 132.51 L1134.72 132.94 L1139.53 133.40 L1144.45 133.88 L1149.47 134.38 L1154.63 134.91 L1159.93 135.46 L1165.37 136.03 L1170.95 136.63 L1176.68 137.25 L1182.55 137.89 L1188.57 138.56 L1194.74 139.25 L1201.07 139.96 L1207.56 140.69 L1214.24 141.44 L1221.08 142.21 L1228.08 143.01 L1235.26 143.82 L1242.62 144.66 L1250.14 145.53 L1257.83 146.41 L1265.70 147.32 L1273.74 148.24 L1281.96 149.19 L1290.35 150.16 L1298.90 151.15 L1307.61 152.15 L1316.50 153.18 L1325.54 154.22 L1334.70 155.27 L1344.00 156.34 L1353.44 157.42 L1362.99 158.52 L1372.58 159.62 L1382.26 160.74 L1392.04 161.87 L1401.82 163.01 L1411.48 164.13 L1421.02 165.23 L1430.48 166.31 L1439.87 167.39 L1449.20 168.47 L1458.53 169.54 L1467.83 170.61 L1477.00 171.67 L1485.91 172.69 L1494.56 173.68 L1503.00 174.64 L1511.21 175.58 L1519.17 176.49 L1526.89 177.38 L1534.38 178.25 L1541.61 179.08 L1548.56 179.89 L1555.21 180.66 L1561.59 181.40 L1567.71 182.11 L1573.57 182.78 L1579.17 183.42 L1584.50 184.03 L1589.61 184.61 L1594.51 185.18 L1599.22 185.72 L1603.70 186.24 L1608.00 186.73 L1612.18 187.22 L1616.22 187.69 L1620.13 188.14 L1623.88 188.57 L1627.49 188.99 L1630.95 189.39 L1634.26 189.77 L1637.43 190.14 L1640.43 190.48 L1643.28 190.81 L1645.97 191.11 L1648.51 191.39 L1650.90 191.66 L1653.03 191.91 L1654.93 192.13 L1656.85 192.35 L1659.03 192.60 L1661.71 192.91 L1664.71 193.26 L1667.63 193.60 L1670.09 193.88 L1671.91 194.09 L1673.34 194.26 L1674.55 194.40 L1675.71 194.53 L1676.83 194.66 L1677.82 194.78 L1678.75 194.88 L1679.69 194.99 L1680.73 195.11 L1681.80 195.24 L1682.75 195.35 L1683.41 195.42 Z"/></clipPath></defs>
<g clip-path="url(#plotclip)"><g clip-path="url(#hsclip)"><path d="M1293.00 597.48 L1292.97 597.48 L1292.92 597.46 L1292.87 597.46 L1292.82 597.48 L1292.77 597.54 L1292.71 597.62 L1292.65 597.70 L1292.58 597.75 L1292.51 597.76 L1292.42 597.75 L1292.33 597.74 L1292.23 597.75 L1292.13 597.81 L1292.04 597.89 L1291.93 597.97 L1291.82 598.02 L1291.70 598.04 L1291.57 598.04 L1291.44 598.03 L1291.29 598.02 L1291.13 598.03 L1290.96 598.03 L1290.77 598.03 L1290.58 598.03 L1290.39 598.05 L1290.19 598.08 L1289.97 598.09 L1289.69 598.03 L1289.37 597.92 L1289.01 597.75 L1288.60 597.53 L1288.10 597.24 L1287.52 596.88 L1286.85 596.45 L1286.13 595.96 L1285.34 595.40 L1284.52 594.79 L1283.64 594.13 L1282.69 593.38 L1281.62 592.53 L1280.42 591.58 L1279.12 590.53 L1277.72 589.39 L1276.23 588.16 L1274.68 586.84 L1273.04 585.44 L1271.30 583.94 L1269.44 582.37 L1267.49 580.73 L1265.43 579.02 L1263.24 577.21 L1260.86 575.25 L1258.29 573.14 L1255.54 570.89 L1252.64 568.52 L1249.60 566.01 L1246.45 563.40 L1243.17 560.69 L1239.71 557.80 L1236.06 554.65 L1232.19 551.28 L1228.14 547.69 L1223.89 543.83 L1219.42 539.61 L1214.82 535.16 L1210.05 530.48 L1204.98 525.27 L1199.45 519.23 L1193.39 512.31 L1186.90 504.67 L1180.06 496.30 L1172.94 487.19 L1165.52 477.31 L1157.76 466.69 L1149.77 455.35 L1141.65 443.37 L1133.32 430.59 L1124.76 417.05 L1116.16 403.03 L1107.70 388.83 L1099.27 374.34 L1090.83 359.47 L1082.66 344.54 L1075.02 329.86 L1067.94 315.33 L1061.30 300.84 L1055.13 286.71 L1049.49 273.24 L1044.38 260.39 L1039.79 248.05 L1035.71 236.36 L1032.16 225.50 L1029.18 215.52 L1026.73 206.32 L1024.77 197.85 L1023.20 190.03 L1022.05 182.91 L1021.34 176.52 L1021.02 170.71 L1021.03 165.33 L1021.38 160.39 L1022.09 155.97 L1023.13 151.98 L1024.44 148.35 L1026.07 145.10 L1028.01 142.25 L1030.20 139.76 L1032.58 137.58 L1035.18 135.76 L1038.00 134.29 L1041.00 133.09 L1044.12 132.08 L1047.37 131.30 L1050.77 130.76 L1054.28 130.37 L1057.85 130.05 L1061.50 129.80 L1065.24 129.66 L1069.03 129.59 L1072.81 129.55 L1076.58 129.54 L1080.36 129.57 L1084.16 129.64 L1088.02 129.74 L1091.91 129.88 L1095.83 130.05 L1099.81 130.25 L1103.87 130.48 L1108.02 130.75 L1112.25 131.04 L1116.56 131.37 L1120.96 131.72 L1125.46 132.10 L1130.04 132.51 L1134.72 132.94 L1139.53 133.40 L1144.45 133.88 L1149.47 134.38 L1154.63 134.91 L1159.93 135.46 L1165.37 136.03 L1170.95 136.63 L1176.68 137.25 L1182.55 137.89 L1188.57 138.56 L1194.74 139.25 L1201.07 139.96 L1207.56 140.69 L1214.24 141.44 L1221.08 142.21 L1228.08 143.01 L1235.26 143.82 L1242.62 144.66 L1250.14 145.53 L1257.83 146.41 L1265.70 147.32 L1273.74 148.24 L1281.96 149.19 L1290.35 150.16 L1298.90 151.15 L1307.61 152.15 L1316.50 153.18 L1325.54 154.22 L1334.70 155.27 L1344.00 156.34 L1353.44 157.42 L1362.99 158.52 L1372.58 159.62 L1382.26 160.74 L1392.04 161.87 L1401.82 163.01 L1411.48 164.13 L1421.02 165.23 L1430.48 166.31 L1439.87 167.39 L1449.20 168.47 L1458.53 169.54 L1467.83 170.61 L1477.00 171.67 L1485.91 172.69 L1494.56 173.68 L1503.00 174.64 L1511.21 175.58 L1519.17 176.49 L1526.89 177.38 L1534.38 178.25 L1541.61 179.08 L1548.56 179.89 L1555.21 180.66 L1561.59 181.40 L1567.71 182.11 L1573.57 182.78 L1579.17 183.42 L1584.50 184.03 L1589.61 184.61 L1594.51 185.18 L1599.22 185.72 L1603.70 186.24 L1608.00 186.73 L1612.18 187.22 L1616.22 187.69 L1620.13 188.14 L1623.88 188.57 L1627.49 188.99 L1630.95 189.39 L1634.26 189.77 L1637.43 190.14 L1640.43 190.48 L1643.28 190.81 L1645.97 191.11 L1648.51 191.39 L1650.90 191.66 L1653.03 191.91 L1654.93 192.13 L1656.85 192.35 L1659.03 192.60 L1661.71 192.91 L1664.71 193.26 L1667.63 193.60 L1670.09 193.88 L1671.91 194.09 L1673.34 194.26 L1674.55 194.40 L1675.71 194.53 L1676.83 194.66 L1677.82 194.78 L1678.75 194.88 L1679.69 194.99 L1680.73 195.11 L1681.80 195.24 L1682.75 195.35 L1683.41 195.42 Z" fill="none" stroke="rgba(10,10,10,0.4)" stroke-width="7" stroke-linejoin="round"/></g><path d="M1293.00 597.48 L1292.97 597.48 L1292.92 597.46 L1292.87 597.46 L1292.82 597.48 L1292.77 597.54 L1292.71 597.62 L1292.65 597.70 L1292.58 597.75 L1292.51 597.76 L1292.42 597.75 L1292.33 597.74 L1292.23 597.75 L1292.13 597.81 L1292.04 597.89 L1291.93 597.97 L1291.82 598.02 L1291.70 598.04 L1291.57 598.04 L1291.44 598.03 L1291.29 598.02 L1291.13 598.03 L1290.96 598.03 L1290.77 598.03 L1290.58 598.03 L1290.39 598.05 L1290.19 598.08 L1289.97 598.09 L1289.69 598.03 L1289.37 597.92 L1289.01 597.75 L1288.60 597.53 L1288.10 597.24 L1287.52 596.88 L1286.85 596.45 L1286.13 595.96 L1285.34 595.40 L1284.52 594.79 L1283.64 594.13 L1282.69 593.38 L1281.62 592.53 L1280.42 591.58 L1279.12 590.53 L1277.72 589.39 L1276.23 588.16 L1274.68 586.84 L1273.04 585.44 L1271.30 583.94 L1269.44 582.37 L1267.49 580.73 L1265.43 579.02 L1263.24 577.21 L1260.86 575.25 L1258.29 573.14 L1255.54 570.89 L1252.64 568.52 L1249.60 566.01 L1246.45 563.40 L1243.17 560.69 L1239.71 557.80 L1236.06 554.65 L1232.19 551.28 L1228.14 547.69 L1223.89 543.83 L1219.42 539.61 L1214.82 535.16 L1210.05 530.48 L1204.98 525.27 L1199.45 519.23 L1193.39 512.31 L1186.90 504.67 L1180.06 496.30 L1172.94 487.19 L1165.52 477.31 L1157.76 466.69 L1149.77 455.35 L1141.65 443.37 L1133.32 430.59 L1124.76 417.05 L1116.16 403.03 L1107.70 388.83 L1099.27 374.34 L1090.83 359.47 L1082.66 344.54 L1075.02 329.86 L1067.94 315.33 L1061.30 300.84 L1055.13 286.71 L1049.49 273.24 L1044.38 260.39 L1039.79 248.05 L1035.71 236.36 L1032.16 225.50 L1029.18 215.52 L1026.73 206.32 L1024.77 197.85 L1023.20 190.03 L1022.05 182.91 L1021.34 176.52 L1021.02 170.71 L1021.03 165.33 L1021.38 160.39 L1022.09 155.97 L1023.13 151.98 L1024.44 148.35 L1026.07 145.10 L1028.01 142.25 L1030.20 139.76 L1032.58 137.58 L1035.18 135.76 L1038.00 134.29 L1041.00 133.09 L1044.12 132.08 L1047.37 131.30 L1050.77 130.76 L1054.28 130.37 L1057.85 130.05 L1061.50 129.80 L1065.24 129.66 L1069.03 129.59 L1072.81 129.55 L1076.58 129.54 L1080.36 129.57 L1084.16 129.64 L1088.02 129.74 L1091.91 129.88 L1095.83 130.05 L1099.81 130.25 L1103.87 130.48 L1108.02 130.75 L1112.25 131.04 L1116.56 131.37 L1120.96 131.72 L1125.46 132.10 L1130.04 132.51 L1134.72 132.94 L1139.53 133.40 L1144.45 133.88 L1149.47 134.38 L1154.63 134.91 L1159.93 135.46 L1165.37 136.03 L1170.95 136.63 L1176.68 137.25 L1182.55 137.89 L1188.57 138.56 L1194.74 139.25 L1201.07 139.96 L1207.56 140.69 L1214.24 141.44 L1221.08 142.21 L1228.08 143.01 L1235.26 143.82 L1242.62 144.66 L1250.14 145.53 L1257.83 146.41 L1265.70 147.32 L1273.74 148.24 L1281.96 149.19 L1290.35 150.16 L1298.90 151.15 L1307.61 152.15 L1316.50 153.18 L1325.54 154.22 L1334.70 155.27 L1344.00 156.34 L1353.44 157.42 L1362.99 158.52 L1372.58 159.62 L1382.26 160.74 L1392.04 161.87 L1401.82 163.01 L1411.48 164.13 L1421.02 165.23 L1430.48 166.31 L1439.87 167.39 L1449.20 168.47 L1458.53 169.54 L1467.83 170.61 L1477.00 171.67 L1485.91 172.69 L1494.56 173.68 L1503.00 174.64 L1511.21 175.58 L1519.17 176.49 L1526.89 177.38 L1534.38 178.25 L1541.61 179.08 L1548.56 179.89 L1555.21 180.66 L1561.59 181.40 L1567.71 182.11 L1573.57 182.78 L1579.17 183.42 L1584.50 184.03 L1589.61 184.61 L1594.51 185.18 L1599.22 185.72 L1603.70 186.24 L1608.00 186.73 L1612.18 187.22 L1616.22 187.69 L1620.13 188.14 L1623.88 188.57 L1627.49 188.99 L1630.95 189.39 L1634.26 189.77 L1637.43 190.14 L1640.43 190.48 L1643.28 190.81 L1645.97 191.11 L1648.51 191.39 L1650.90 191.66 L1653.03 191.91 L1654.93 192.13 L1656.85 192.35 L1659.03 192.60 L1661.71 192.91 L1664.71 193.26 L1667.63 193.60 L1670.09 193.88 L1671.91 194.09 L1673.34 194.26 L1674.55 194.40 L1675.71 194.53 L1676.83 194.66 L1677.82 194.78 L1678.75 194.88 L1679.69 194.99 L1680.73 195.11 L1681.80 195.24 L1682.75 195.35 L1683.41 195.42 Z" fill="none" stroke="#242424" stroke-width="3.6" stroke-linejoin="round"/></g>
<rect x="1019.8" y="119.7" width="639.7" height="491.6" fill="none" stroke="#8e8e8e" stroke-width="1.5"/>
<rect x="1145.75" y="142.95" width="13.10" height="13.10" fill="none" stroke="#f2f2f2" stroke-width="1.60"/>
<circle cx="1150.90" cy="146.50" r="4.1" fill="#00a010" stroke="#111" stroke-width="1.4"/>
<rect x="1229.95" y="150.65" width="13.10" height="13.10" fill="none" stroke="#f2f2f2" stroke-width="1.60"/>
<circle cx="1234.90" cy="153.40" r="4.1" fill="#b8b000" stroke="#111" stroke-width="1.4"/>
<rect x="1492.95" y="175.45" width="13.10" height="13.10" fill="none" stroke="#f2f2f2" stroke-width="1.60"/>
<circle cx="1517.00" cy="181.80" r="4.1" fill="#c00000" stroke="#111" stroke-width="1.4"/>
<rect x="1160.95" y="230.95" width="13.10" height="13.10" fill="none" stroke="#f2f2f2" stroke-width="1.60"/>
<circle cx="1158.90" cy="229.30" r="4.1" fill="#20b8c0" stroke="#111" stroke-width="1.4"/>
<rect x="1337.95" y="332.95" width="13.10" height="13.10" fill="none" stroke="#f2f2f2" stroke-width="1.60"/>
<circle cx="1346.90" cy="342.50" r="4.1" fill="#b000b0" stroke="#111" stroke-width="1.4"/>
<rect x="1200.05" y="474.95" width="13.10" height="13.10" fill="none" stroke="#f2f2f2" stroke-width="1.60"/>
<circle cx="1198.50" cy="478.60" r="4.1" fill="#0000c0" stroke="#111" stroke-width="1.4"/>
<rect x="1223.10" y="220.10" width="13.00" height="13.00" fill="none" stroke="#000" stroke-width="1.90"/>
<circle cx="1229.4" cy="223.3" r="4.2" fill="#fafafa" stroke="#111" stroke-width="1.4"/>
<text x="14.56" y="712.10" font-size="29.07" textLength="222.19" lengthAdjust="spacingAndGlyphs" fill="#f2f2f2">Current Reading</text>
<text x="15.82" y="782.40" font-size="24.71" textLength="103.45" lengthAdjust="spacingAndGlyphs" fill="#f2f2f2">x: 0,3162</text>
<text x="172.64" y="782.40" font-size="24.71" textLength="103.12" lengthAdjust="spacingAndGlyphs" fill="#f2f2f2">y: 0,3362</text>
<text x="15.75" y="822.70" font-size="24.71" textLength="97.15" lengthAdjust="spacingAndGlyphs" fill="#f2f2f2">fL: 97,93</text>
<text x="14.98" y="863.20" font-size="24.71" textLength="161.38" lengthAdjust="spacingAndGlyphs" fill="#f2f2f2">cd/m²: 335,53</text>
<rect x="358.4" y="685.5" width="249.7" height="180.2" fill="#242424"/>
<line x1="358.4" y1="705.00" x2="608.1" y2="705.00" stroke="#8e8e8e" stroke-width="1.5"/>
<line x1="352.4" y1="705.00" x2="358.4" y2="705.00" stroke="#d0d0d0" stroke-width="1.6"/>
<text x="327.17" y="710.00" font-size="14.53" fill="#e2e2e2">104</text>
<line x1="358.4" y1="741.10" x2="608.1" y2="741.10" stroke="#8e8e8e" stroke-width="1.5"/>
<line x1="352.4" y1="741.10" x2="358.4" y2="741.10" stroke="#d0d0d0" stroke-width="1.6"/>
<text x="327.48" y="746.10" font-size="14.53" fill="#e2e2e2">102</text>
<line x1="358.4" y1="777.20" x2="608.1" y2="777.20" stroke="#8e8e8e" stroke-width="1.5"/>
<line x1="352.4" y1="777.20" x2="358.4" y2="777.20" stroke="#d0d0d0" stroke-width="1.6"/>
<text x="327.32" y="782.20" font-size="14.53" fill="#e2e2e2">100</text>
<line x1="358.4" y1="813.30" x2="608.1" y2="813.30" stroke="#8e8e8e" stroke-width="1.5"/>
<line x1="352.4" y1="813.30" x2="358.4" y2="813.30" stroke="#d0d0d0" stroke-width="1.6"/>
<text x="335.46" y="818.30" font-size="14.53" fill="#e2e2e2">98</text>
<line x1="358.4" y1="849.40" x2="608.1" y2="849.40" stroke="#8e8e8e" stroke-width="1.5"/>
<line x1="352.4" y1="849.40" x2="358.4" y2="849.40" stroke="#d0d0d0" stroke-width="1.6"/>
<text x="335.47" y="854.40" font-size="14.53" fill="#e2e2e2">96</text>
<defs><linearGradient id="rb_r" x1="0" x2="0" y1="0" y2="1"><stop offset="0" stop-color="#ff5c5c"/><stop offset="1" stop-color="#ff3c3c"/></linearGradient><linearGradient id="rb_g" x1="0" x2="0" y1="0" y2="1"><stop offset="0" stop-color="#5aaa5a"/><stop offset="1" stop-color="#3a983a"/></linearGradient><linearGradient id="rb_b" x1="0" x2="0" y1="0" y2="1"><stop offset="0" stop-color="#5a5aff"/><stop offset="1" stop-color="#4a4aff"/></linearGradient></defs>
<rect x="382.8" y="777.3" width="65.8" height="88.4" fill="#000"/>
<rect x="384.2" y="778.7" width="63.0" height="87.0" fill="url(#rb_r)"/>
<rect x="449.1" y="769.8" width="66.1" height="95.9" fill="#000"/>
<rect x="450.5" y="771.2" width="63.3" height="94.5" fill="url(#rb_g)"/>
<rect x="516.2" y="815.8" width="65.3" height="49.9" fill="#000"/>
<rect x="517.6" y="817.2" width="62.5" height="48.5" fill="url(#rb_b)"/>
<rect x="358.4" y="685.5" width="249.7" height="180.2" fill="none" stroke="#8e8e8e" stroke-width="1.5"/>
<line x1="358.4" y1="865.7" x2="358.4" y2="871.2" stroke="#d0d0d0" stroke-width="1.5"/>
<line x1="608.1" y1="865.7" x2="608.1" y2="871.2" stroke="#d0d0d0" stroke-width="1.5"/>
<text x="424.00" y="681.00" font-size="14.53" fill="#e2e2e2">RGB Balance</text>
<text x="463.69" y="882.80" font-size="14.53" fill="#e2e2e2">100W</text>
<text x="769.86" y="672.00" font-size="14.24" fill="#e2e2e2">CIE 1931 xy</text>
<rect x="637.6" y="676.3" width="343.1" height="199.8" fill="none" stroke="#232323" stroke-width="1"/>
<rect x="638.3" y="677" width="341.7" height="198.4" fill="#9a9a9a"/>
<defs><linearGradient id="xy0" x1="0" x2="1"><stop offset="0.000" stop-color="#85ffcf"/><stop offset="0.056" stop-color="#8dffcf"/><stop offset="0.111" stop-color="#94ffcf"/><stop offset="0.167" stop-color="#9dffce"/><stop offset="0.222" stop-color="#a5ffce"/><stop offset="0.278" stop-color="#adffcd"/><stop offset="0.333" stop-color="#b6ffcd"/><stop offset="0.389" stop-color="#beffcd"/><stop offset="0.444" stop-color="#c7ffcc"/><stop offset="0.500" stop-color="#d0ffcc"/><stop offset="0.556" stop-color="#d9ffcc"/><stop offset="0.611" stop-color="#e2ffcb"/><stop offset="0.667" stop-color="#ebffcb"/><stop offset="0.722" stop-color="#f4ffca"/><stop offset="0.778" stop-color="#feffca"/><stop offset="0.833" stop-color="#fff7c3"/><stop offset="0.889" stop-color="#ffeebb"/><stop offset="0.944" stop-color="#ffe5b4"/><stop offset="1.000" stop-color="#ffddae"/></linearGradient><linearGradient id="xy1" x1="0" x2="1"><stop offset="0.000" stop-color="#86ffd1"/><stop offset="0.056" stop-color="#8effd1"/><stop offset="0.111" stop-color="#96ffd0"/><stop offset="0.167" stop-color="#9effd0"/><stop offset="0.222" stop-color="#a6ffd0"/><stop offset="0.278" stop-color="#afffcf"/><stop offset="0.333" stop-color="#b7ffcf"/><stop offset="0.389" stop-color="#c0ffcf"/><stop offset="0.444" stop-color="#c9ffce"/><stop offset="0.500" stop-color="#d1ffce"/><stop offset="0.556" stop-color="#daffce"/><stop offset="0.611" stop-color="#e4ffcd"/><stop offset="0.667" stop-color="#edffcd"/><stop offset="0.722" stop-color="#f6ffcc"/><stop offset="0.778" stop-color="#fffecb"/><stop offset="0.833" stop-color="#fff5c3"/><stop offset="0.889" stop-color="#ffecbc"/><stop offset="0.944" stop-color="#ffe3b5"/><stop offset="1.000" stop-color="#ffdbae"/></linearGradient><linearGradient id="xy2" x1="0" x2="1"><stop offset="0.000" stop-color="#87ffd3"/><stop offset="0.056" stop-color="#8fffd2"/><stop offset="0.111" stop-color="#97ffd2"/><stop offset="0.167" stop-color="#9fffd2"/><stop offset="0.222" stop-color="#a8ffd1"/><stop offset="0.278" stop-color="#b0ffd1"/><stop offset="0.333" stop-color="#b9ffd1"/><stop offset="0.389" stop-color="#c1ffd0"/><stop offset="0.444" stop-color="#caffd0"/><stop offset="0.500" stop-color="#d3ffd0"/><stop offset="0.556" stop-color="#dcffcf"/><stop offset="0.611" stop-color="#e6ffcf"/><stop offset="0.667" stop-color="#efffcf"/><stop offset="0.722" stop-color="#f9ffce"/><stop offset="0.778" stop-color="#fffccb"/><stop offset="0.833" stop-color="#fff3c4"/><stop offset="0.889" stop-color="#ffeabc"/><stop offset="0.944" stop-color="#ffe2b5"/><stop offset="1.000" stop-color="#ffdaaf"/></linearGradient><linearGradient id="xy3" x1="0" x2="1"><stop offset="0.000" stop-color="#89ffd5"/><stop offset="0.056" stop-color="#91ffd4"/><stop offset="0.111" stop-color="#99ffd4"/><stop offset="0.167" stop-color="#a1ffd4"/><stop offset="0.222" stop-color="#a9ffd3"/><stop offset="0.278" stop-color="#b2ffd3"/><stop offset="0.333" stop-color="#baffd3"/><stop offset="0.389" stop-color="#c3ffd2"/><stop offset="0.444" stop-color="#ccffd2"/><stop offset="0.500" stop-color="#d5ffd2"/><stop offset="0.556" stop-color="#deffd1"/><stop offset="0.611" stop-color="#e7ffd1"/><stop offset="0.667" stop-color="#f1ffd1"/><stop offset="0.722" stop-color="#fbffd0"/><stop offset="0.778" stop-color="#fffacc"/><stop offset="0.833" stop-color="#fff1c4"/><stop offset="0.889" stop-color="#ffe8bc"/><stop offset="0.944" stop-color="#ffe0b5"/><stop offset="1.000" stop-color="#ffd8af"/></linearGradient><linearGradient id="xy4" x1="0" x2="1"><stop offset="0.000" stop-color="#8affd6"/><stop offset="0.056" stop-color="#92ffd6"/><stop offset="0.111" stop-color="#9affd6"/><stop offset="0.167" stop-color="#a2ffd6"/><stop offset="0.222" stop-color="#abffd5"/><stop offset="0.278" stop-color="#b3ffd5"/><stop offset="0.333" stop-color="#bcffd5"/><stop offset="0.389" stop-color="#c5ffd4"/><stop offset="0.444" stop-color="#ceffd4"/><stop offset="0.500" stop-color="#d7ffd4"/><stop offset="0.556" stop-color="#e0ffd3"/><stop offset="0.611" stop-color="#e9ffd3"/><stop offset="0.667" stop-color="#f3ffd3"/><stop offset="0.722" stop-color="#fdffd2"/><stop offset="0.778" stop-color="#fff8cc"/><stop offset="0.833" stop-color="#ffefc4"/><stop offset="0.889" stop-color="#ffe6bd"/><stop offset="0.944" stop-color="#ffdeb6"/><stop offset="1.000" stop-color="#ffd6af"/></linearGradient><linearGradient id="xy5" x1="0" x2="1"><stop offset="0.000" stop-color="#8bffd8"/><stop offset="0.056" stop-color="#93ffd8"/><stop offset="0.111" stop-color="#9cffd8"/><stop offset="0.167" stop-color="#a4ffd7"/><stop offset="0.222" stop-color="#acffd7"/><stop offset="0.278" stop-color="#b5ffd7"/><stop offset="0.333" stop-color="#beffd7"/><stop offset="0.389" stop-color="#c7ffd6"/><stop offset="0.444" stop-color="#d0ffd6"/><stop offset="0.500" stop-color="#d9ffd6"/><stop offset="0.556" stop-color="#e2ffd5"/><stop offset="0.611" stop-color="#ebffd5"/><stop offset="0.667" stop-color="#f5ffd5"/><stop offset="0.722" stop-color="#ffffd4"/><stop offset="0.778" stop-color="#fff6cc"/><stop offset="0.833" stop-color="#ffedc5"/><stop offset="0.889" stop-color="#ffe4bd"/><stop offset="0.944" stop-color="#ffdcb6"/><stop offset="1.000" stop-color="#ffd5b0"/></linearGradient><linearGradient id="xy6" x1="0" x2="1"><stop offset="0.000" stop-color="#8dffda"/><stop offset="0.056" stop-color="#95ffda"/><stop offset="0.111" stop-color="#9dffda"/><stop offset="0.167" stop-color="#a5ffd9"/><stop offset="0.222" stop-color="#aeffd9"/><stop offset="0.278" stop-color="#b7ffd9"/><stop offset="0.333" stop-color="#bfffd9"/><stop offset="0.389" stop-color="#c8ffd8"/><stop offset="0.444" stop-color="#d1ffd8"/><stop offset="0.500" stop-color="#daffd8"/><stop offset="0.556" stop-color="#e4ffd7"/><stop offset="0.611" stop-color="#edffd7"/><stop offset="0.667" stop-color="#f7ffd7"/><stop offset="0.722" stop-color="#fffdd5"/><stop offset="0.778" stop-color="#fff4cd"/><stop offset="0.833" stop-color="#ffebc5"/><stop offset="0.889" stop-color="#ffe2bd"/><stop offset="0.944" stop-color="#ffdab7"/><stop offset="1.000" stop-color="#ffd3b0"/></linearGradient><linearGradient id="xy7" x1="0" x2="1"><stop offset="0.000" stop-color="#8effdc"/><stop offset="0.056" stop-color="#96ffdc"/><stop offset="0.111" stop-color="#9effdc"/><stop offset="0.167" stop-color="#a7ffdb"/><stop offset="0.222" stop-color="#afffdb"/><stop offset="0.278" stop-color="#b8ffdb"/><stop offset="0.333" stop-color="#c1ffda"/><stop offset="0.389" stop-color="#caffda"/><stop offset="0.444" stop-color="#d3ffda"/><stop offset="0.500" stop-color="#dcffda"/><stop offset="0.556" stop-color="#e6ffd9"/><stop offset="0.611" stop-color="#efffd9"/><stop offset="0.667" stop-color="#f9ffd9"/><stop offset="0.722" stop-color="#fffbd5"/><stop offset="0.778" stop-color="#fff2cd"/><stop offset="0.833" stop-color="#ffe9c5"/><stop offset="0.889" stop-color="#ffe1be"/><stop offset="0.944" stop-color="#ffd9b7"/><stop offset="1.000" stop-color="#ffd1b0"/></linearGradient><linearGradient id="xy8" x1="0" x2="1"><stop offset="0.000" stop-color="#8fffde"/><stop offset="0.056" stop-color="#98ffde"/><stop offset="0.111" stop-color="#a0ffdd"/><stop offset="0.167" stop-color="#a8ffdd"/><stop offset="0.222" stop-color="#b1ffdd"/><stop offset="0.278" stop-color="#baffdd"/><stop offset="0.333" stop-color="#c3ffdc"/><stop offset="0.389" stop-color="#ccffdc"/><stop offset="0.444" stop-color="#d5ffdc"/><stop offset="0.500" stop-color="#deffdc"/><stop offset="0.556" stop-color="#e8ffdb"/><stop offset="0.611" stop-color="#f1ffdb"/><stop offset="0.667" stop-color="#fbffdb"/><stop offset="0.722" stop-color="#fff9d5"/><stop offset="0.778" stop-color="#fff0cd"/><stop offset="0.833" stop-color="#ffe7c5"/><stop offset="0.889" stop-color="#ffdfbe"/><stop offset="0.944" stop-color="#ffd7b7"/><stop offset="1.000" stop-color="#ffcfb1"/></linearGradient><linearGradient id="xy9" x1="0" x2="1"><stop offset="0.000" stop-color="#91ffe0"/><stop offset="0.056" stop-color="#99ffe0"/><stop offset="0.111" stop-color="#a1ffdf"/><stop offset="0.167" stop-color="#aaffdf"/><stop offset="0.222" stop-color="#b3ffdf"/><stop offset="0.278" stop-color="#bbffdf"/><stop offset="0.333" stop-color="#c4ffde"/><stop offset="0.389" stop-color="#ceffde"/><stop offset="0.444" stop-color="#d7ffde"/><stop offset="0.500" stop-color="#e0ffde"/><stop offset="0.556" stop-color="#eaffdd"/><stop offset="0.611" stop-color="#f3ffdd"/><stop offset="0.667" stop-color="#fdffdd"/><stop offset="0.722" stop-color="#fff7d6"/><stop offset="0.778" stop-color="#ffeece"/><stop offset="0.833" stop-color="#ffe5c6"/><stop offset="0.889" stop-color="#ffddbe"/><stop offset="0.944" stop-color="#ffd5b8"/><stop offset="1.000" stop-color="#ffceb1"/></linearGradient><linearGradient id="xy10" x1="0" x2="1"><stop offset="0.000" stop-color="#92ffe2"/><stop offset="0.056" stop-color="#9affe2"/><stop offset="0.111" stop-color="#a3ffe1"/><stop offset="0.167" stop-color="#acffe1"/><stop offset="0.222" stop-color="#b4ffe1"/><stop offset="0.278" stop-color="#bdffe1"/><stop offset="0.333" stop-color="#c6ffe0"/><stop offset="0.389" stop-color="#cfffe0"/><stop offset="0.444" stop-color="#d9ffe0"/><stop offset="0.500" stop-color="#e2ffe0"/><stop offset="0.556" stop-color="#ecffe0"/><stop offset="0.611" stop-color="#f5ffdf"/><stop offset="0.667" stop-color="#ffffdf"/><stop offset="0.722" stop-color="#fff5d6"/><stop offset="0.778" stop-color="#ffecce"/><stop offset="0.833" stop-color="#ffe3c6"/><stop offset="0.889" stop-color="#ffdbbf"/><stop offset="0.944" stop-color="#ffd3b8"/><stop offset="1.000" stop-color="#ffccb1"/></linearGradient><linearGradient id="xy11" x1="0" x2="1"><stop offset="0.000" stop-color="#94ffe4"/><stop offset="0.056" stop-color="#9cffe4"/><stop offset="0.111" stop-color="#a4ffe3"/><stop offset="0.167" stop-color="#adffe3"/><stop offset="0.222" stop-color="#b6ffe3"/><stop offset="0.278" stop-color="#bfffe3"/><stop offset="0.333" stop-color="#c8ffe3"/><stop offset="0.389" stop-color="#d1ffe2"/><stop offset="0.444" stop-color="#daffe2"/><stop offset="0.500" stop-color="#e4ffe2"/><stop offset="0.556" stop-color="#eeffe2"/><stop offset="0.611" stop-color="#f8ffe1"/><stop offset="0.667" stop-color="#fffcdf"/><stop offset="0.722" stop-color="#fff3d6"/><stop offset="0.778" stop-color="#ffeace"/><stop offset="0.833" stop-color="#ffe1c6"/><stop offset="0.889" stop-color="#ffd9bf"/><stop offset="0.944" stop-color="#ffd2b8"/><stop offset="1.000" stop-color="#ffcab2"/></linearGradient><linearGradient id="xy12" x1="0" x2="1"><stop offset="0.000" stop-color="#95ffe6"/><stop offset="0.056" stop-color="#9dffe6"/><stop offset="0.111" stop-color="#a6ffe5"/><stop offset="0.167" stop-color="#afffe5"/><stop offset="0.222" stop-color="#b8ffe5"/><stop offset="0.278" stop-color="#c1ffe5"/><stop offset="0.333" stop-color="#caffe5"/><stop offset="0.389" stop-color="#d3ffe4"/><stop offset="0.444" stop-color="#dcffe4"/><stop offset="0.500" stop-color="#e6ffe4"/><stop offset="0.556" stop-color="#f0ffe4"/><stop offset="0.611" stop-color="#faffe4"/><stop offset="0.667" stop-color="#fffadf"/><stop offset="0.722" stop-color="#fff1d7"/><stop offset="0.778" stop-color="#ffe8ce"/><stop offset="0.833" stop-color="#ffdfc7"/><stop offset="0.889" stop-color="#ffd7bf"/><stop offset="0.944" stop-color="#ffd0b8"/><stop offset="1.000" stop-color="#ffc9b2"/></linearGradient><linearGradient id="xy13" x1="0" x2="1"><stop offset="0.000" stop-color="#96ffe8"/><stop offset="0.056" stop-color="#9fffe8"/><stop offset="0.111" stop-color="#a8ffe7"/><stop offset="0.167" stop-color="#b0ffe7"/><stop offset="0.222" stop-color="#b9ffe7"/><stop offset="0.278" stop-color="#c2ffe7"/><stop offset="0.333" stop-color="#cbffe7"/><stop offset="0.389" stop-color="#d5ffe7"/><stop offset="0.444" stop-color="#deffe6"/><stop offset="0.500" stop-color="#e8ffe6"/><stop offset="0.556" stop-color="#f2ffe6"/><stop offset="0.611" stop-color="#fcffe6"/><stop offset="0.667" stop-color="#fff8e0"/><stop offset="0.722" stop-color="#ffefd7"/><stop offset="0.778" stop-color="#ffe6cf"/><stop offset="0.833" stop-color="#ffdec7"/><stop offset="0.889" stop-color="#ffd6c0"/><stop offset="0.944" stop-color="#ffceb9"/><stop offset="1.000" stop-color="#ffc7b2"/></linearGradient><linearGradient id="xy14" x1="0" x2="1"><stop offset="0.000" stop-color="#98ffea"/><stop offset="0.056" stop-color="#a0ffea"/><stop offset="0.111" stop-color="#a9ffe9"/><stop offset="0.167" stop-color="#b2ffe9"/><stop offset="0.222" stop-color="#bbffe9"/><stop offset="0.278" stop-color="#c4ffe9"/><stop offset="0.333" stop-color="#cdffe9"/><stop offset="0.389" stop-color="#d7ffe9"/><stop offset="0.444" stop-color="#e0ffe8"/><stop offset="0.500" stop-color="#eaffe8"/><stop offset="0.556" stop-color="#f4ffe8"/><stop offset="0.611" stop-color="#feffe8"/><stop offset="0.667" stop-color="#fff6e0"/><stop offset="0.722" stop-color="#ffedd7"/><stop offset="0.778" stop-color="#ffe4cf"/><stop offset="0.833" stop-color="#ffdcc7"/><stop offset="0.889" stop-color="#ffd4c0"/><stop offset="0.944" stop-color="#ffccb9"/><stop offset="1.000" stop-color="#ffc5b3"/></linearGradient><linearGradient id="xy15" x1="0" x2="1"><stop offset="0.000" stop-color="#99ffec"/><stop offset="0.056" stop-color="#a2ffec"/><stop offset="0.111" stop-color="#abffec"/><stop offset="0.167" stop-color="#b4ffeb"/><stop offset="0.222" stop-color="#bdffeb"/><stop offset="0.278" stop-color="#c6ffeb"/><stop offset="0.333" stop-color="#cfffeb"/><stop offset="0.389" stop-color="#d9ffeb"/><stop offset="0.444" stop-color="#e2ffeb"/><stop offset="0.500" stop-color="#ecffeb"/><stop offset="0.556" stop-color="#f6ffea"/><stop offset="0.611" stop-color="#fffee9"/><stop offset="0.667" stop-color="#fff4e0"/><stop offset="0.722" stop-color="#ffebd7"/><stop offset="0.778" stop-color="#ffe2cf"/><stop offset="0.833" stop-color="#ffdac8"/><stop offset="0.889" stop-color="#ffd2c0"/><stop offset="0.944" stop-color="#ffcbb9"/><stop offset="1.000" stop-color="#ffc4b3"/></linearGradient><linearGradient id="xy16" x1="0" x2="1"><stop offset="0.000" stop-color="#9bffee"/><stop offset="0.056" stop-color="#a4ffee"/><stop offset="0.111" stop-color="#acffee"/><stop offset="0.167" stop-color="#b5ffed"/><stop offset="0.222" stop-color="#beffed"/><stop offset="0.278" stop-color="#c8ffed"/><stop offset="0.333" stop-color="#d1ffed"/><stop offset="0.389" stop-color="#dbffed"/><stop offset="0.444" stop-color="#e4ffed"/><stop offset="0.500" stop-color="#eeffed"/><stop offset="0.556" stop-color="#f8ffed"/><stop offset="0.611" stop-color="#fffce9"/><stop offset="0.667" stop-color="#fff2e0"/><stop offset="0.722" stop-color="#ffe9d8"/><stop offset="0.778" stop-color="#ffe0d0"/><stop offset="0.833" stop-color="#ffd8c8"/><stop offset="0.889" stop-color="#ffd0c1"/><stop offset="0.944" stop-color="#ffc9ba"/><stop offset="1.000" stop-color="#ffc2b3"/></linearGradient><linearGradient id="xy17" x1="0" x2="1"><stop offset="0.000" stop-color="#9cfff0"/><stop offset="0.056" stop-color="#a5fff0"/><stop offset="0.111" stop-color="#aefff0"/><stop offset="0.167" stop-color="#b7fff0"/><stop offset="0.222" stop-color="#c0fff0"/><stop offset="0.278" stop-color="#c9ffef"/><stop offset="0.333" stop-color="#d3ffef"/><stop offset="0.389" stop-color="#dcffef"/><stop offset="0.444" stop-color="#e6ffef"/><stop offset="0.500" stop-color="#f0ffef"/><stop offset="0.556" stop-color="#faffef"/><stop offset="0.611" stop-color="#fffaea"/><stop offset="0.667" stop-color="#fff0e1"/><stop offset="0.722" stop-color="#ffe7d8"/><stop offset="0.778" stop-color="#ffded0"/><stop offset="0.833" stop-color="#ffd6c8"/><stop offset="0.889" stop-color="#ffcfc1"/><stop offset="0.944" stop-color="#ffc7ba"/><stop offset="1.000" stop-color="#ffc1b4"/></linearGradient><linearGradient id="xy18" x1="0" x2="1"><stop offset="0.000" stop-color="#9efff2"/><stop offset="0.056" stop-color="#a7fff2"/><stop offset="0.111" stop-color="#b0fff2"/><stop offset="0.167" stop-color="#b9fff2"/><stop offset="0.222" stop-color="#c2fff2"/><stop offset="0.278" stop-color="#cbfff2"/><stop offset="0.333" stop-color="#d5fff1"/><stop offset="0.389" stop-color="#defff1"/><stop offset="0.444" stop-color="#e8fff1"/><stop offset="0.500" stop-color="#f2fff1"/><stop offset="0.556" stop-color="#fcfff1"/><stop offset="0.611" stop-color="#fff7ea"/><stop offset="0.667" stop-color="#ffeee1"/><stop offset="0.722" stop-color="#ffe5d8"/><stop offset="0.778" stop-color="#ffddd0"/><stop offset="0.833" stop-color="#ffd5c8"/><stop offset="0.889" stop-color="#ffcdc1"/><stop offset="0.944" stop-color="#ffc6ba"/><stop offset="1.000" stop-color="#ffbfb4"/></linearGradient><linearGradient id="xy19" x1="0" x2="1"><stop offset="0.000" stop-color="#9ffff4"/><stop offset="0.056" stop-color="#a8fff4"/><stop offset="0.111" stop-color="#b1fff4"/><stop offset="0.167" stop-color="#bafff4"/><stop offset="0.222" stop-color="#c4fff4"/><stop offset="0.278" stop-color="#cdfff4"/><stop offset="0.333" stop-color="#d7fff4"/><stop offset="0.389" stop-color="#e0fff4"/><stop offset="0.444" stop-color="#eafff4"/><stop offset="0.500" stop-color="#f4fff3"/><stop offset="0.556" stop-color="#fffff3"/><stop offset="0.611" stop-color="#fff5ea"/><stop offset="0.667" stop-color="#ffece1"/><stop offset="0.722" stop-color="#ffe3d8"/><stop offset="0.778" stop-color="#ffdbd0"/><stop offset="0.833" stop-color="#ffd3c9"/><stop offset="0.889" stop-color="#ffcbc2"/><stop offset="0.944" stop-color="#ffc4bb"/><stop offset="1.000" stop-color="#ffbdb4"/></linearGradient><linearGradient id="xy20" x1="0" x2="1"><stop offset="0.000" stop-color="#a1fff6"/><stop offset="0.056" stop-color="#aafff6"/><stop offset="0.111" stop-color="#b3fff6"/><stop offset="0.167" stop-color="#bcfff6"/><stop offset="0.222" stop-color="#c5fff6"/><stop offset="0.278" stop-color="#cffff6"/><stop offset="0.333" stop-color="#d9fff6"/><stop offset="0.389" stop-color="#e2fff6"/><stop offset="0.444" stop-color="#ecfff6"/><stop offset="0.500" stop-color="#f6fff6"/><stop offset="0.556" stop-color="#fffdf4"/><stop offset="0.611" stop-color="#fff3ea"/><stop offset="0.667" stop-color="#ffeae1"/><stop offset="0.722" stop-color="#ffe1d9"/><stop offset="0.778" stop-color="#ffd9d1"/><stop offset="0.833" stop-color="#ffd1c9"/><stop offset="0.889" stop-color="#ffc9c2"/><stop offset="0.944" stop-color="#ffc2bb"/><stop offset="1.000" stop-color="#ffbcb5"/></linearGradient><linearGradient id="xy21" x1="0" x2="1"><stop offset="0.000" stop-color="#a3fff8"/><stop offset="0.056" stop-color="#acfff8"/><stop offset="0.111" stop-color="#b5fff8"/><stop offset="0.167" stop-color="#befff8"/><stop offset="0.222" stop-color="#c7fff8"/><stop offset="0.278" stop-color="#d1fff8"/><stop offset="0.333" stop-color="#dbfff8"/><stop offset="0.389" stop-color="#e4fff8"/><stop offset="0.444" stop-color="#eefff8"/><stop offset="0.500" stop-color="#f9fff8"/><stop offset="0.556" stop-color="#fffbf4"/><stop offset="0.611" stop-color="#fff1eb"/><stop offset="0.667" stop-color="#ffe8e2"/><stop offset="0.722" stop-color="#ffdfd9"/><stop offset="0.778" stop-color="#ffd7d1"/><stop offset="0.833" stop-color="#ffcfc9"/><stop offset="0.889" stop-color="#ffc8c2"/><stop offset="0.944" stop-color="#ffc1bb"/><stop offset="1.000" stop-color="#ffbab5"/></linearGradient><linearGradient id="xy22" x1="0" x2="1"><stop offset="0.000" stop-color="#a4fffb"/><stop offset="0.056" stop-color="#adfffb"/><stop offset="0.111" stop-color="#b6fffb"/><stop offset="0.167" stop-color="#c0fffb"/><stop offset="0.222" stop-color="#c9fffb"/><stop offset="0.278" stop-color="#d3fffb"/><stop offset="0.333" stop-color="#dcfffb"/><stop offset="0.389" stop-color="#e6fffb"/><stop offset="0.444" stop-color="#f1fffb"/><stop offset="0.500" stop-color="#fbfffa"/><stop offset="0.556" stop-color="#fff9f4"/><stop offset="0.611" stop-color="#ffefeb"/><stop offset="0.667" stop-color="#ffe6e2"/><stop offset="0.722" stop-color="#ffddd9"/><stop offset="0.778" stop-color="#ffd5d1"/><stop offset="0.833" stop-color="#ffcdca"/><stop offset="0.889" stop-color="#ffc6c2"/><stop offset="0.944" stop-color="#ffbfbc"/><stop offset="1.000" stop-color="#ffb9b5"/></linearGradient><linearGradient id="xy23" x1="0" x2="1"><stop offset="0.000" stop-color="#a6fffd"/><stop offset="0.056" stop-color="#affffd"/><stop offset="0.111" stop-color="#b8fffd"/><stop offset="0.167" stop-color="#c1fffd"/><stop offset="0.222" stop-color="#cbfffd"/><stop offset="0.278" stop-color="#d5fffd"/><stop offset="0.333" stop-color="#defffd"/><stop offset="0.389" stop-color="#e8fffd"/><stop offset="0.444" stop-color="#f3fffd"/><stop offset="0.500" stop-color="#fdfffd"/><stop offset="0.556" stop-color="#fff7f5"/><stop offset="0.611" stop-color="#ffedeb"/><stop offset="0.667" stop-color="#ffe4e2"/><stop offset="0.722" stop-color="#ffdbda"/><stop offset="0.778" stop-color="#ffd3d2"/><stop offset="0.833" stop-color="#ffccca"/><stop offset="0.889" stop-color="#ffc4c3"/><stop offset="0.944" stop-color="#ffbebc"/><stop offset="1.000" stop-color="#ffb7b6"/></linearGradient><linearGradient id="xy24" x1="0" x2="1"><stop offset="0.000" stop-color="#a7ffff"/><stop offset="0.056" stop-color="#b0ffff"/><stop offset="0.111" stop-color="#baffff"/><stop offset="0.167" stop-color="#c3ffff"/><stop offset="0.222" stop-color="#cdffff"/><stop offset="0.278" stop-color="#d6ffff"/><stop offset="0.333" stop-color="#e0ffff"/><stop offset="0.389" stop-color="#eaffff"/><stop offset="0.444" stop-color="#f5ffff"/><stop offset="0.500" stop-color="#ffffff"/><stop offset="0.556" stop-color="#fff5f5"/><stop offset="0.611" stop-color="#ffebeb"/><stop offset="0.667" stop-color="#ffe2e2"/><stop offset="0.722" stop-color="#ffd9da"/><stop offset="0.778" stop-color="#ffd1d2"/><stop offset="0.833" stop-color="#ffcaca"/><stop offset="0.889" stop-color="#ffc3c3"/><stop offset="0.944" stop-color="#ffbcbc"/><stop offset="1.000" stop-color="#ffb5b6"/></linearGradient><linearGradient id="xy25" x1="0" x2="1"><stop offset="0.000" stop-color="#a7fdff"/><stop offset="0.056" stop-color="#b1fdff"/><stop offset="0.111" stop-color="#bafdff"/><stop offset="0.167" stop-color="#c3fdff"/><stop offset="0.222" stop-color="#cdfdff"/><stop offset="0.278" stop-color="#d6fcff"/><stop offset="0.333" stop-color="#e0fcff"/><stop offset="0.389" stop-color="#eafcff"/><stop offset="0.444" stop-color="#f4fcff"/><stop offset="0.500" stop-color="#fffcff"/><stop offset="0.556" stop-color="#fff2f5"/><stop offset="0.611" stop-color="#ffe9eb"/><stop offset="0.667" stop-color="#ffe0e3"/><stop offset="0.722" stop-color="#ffd8da"/><stop offset="0.778" stop-color="#ffd0d2"/><stop offset="0.833" stop-color="#ffc8cb"/><stop offset="0.889" stop-color="#ffc1c3"/><stop offset="0.944" stop-color="#ffbabd"/><stop offset="1.000" stop-color="#ffb4b6"/></linearGradient><linearGradient id="xy26" x1="0" x2="1"><stop offset="0.000" stop-color="#a8faff"/><stop offset="0.056" stop-color="#b1faff"/><stop offset="0.111" stop-color="#bafaff"/><stop offset="0.167" stop-color="#c3faff"/><stop offset="0.222" stop-color="#cdfaff"/><stop offset="0.278" stop-color="#d6faff"/><stop offset="0.333" stop-color="#e0faff"/><stop offset="0.389" stop-color="#eafaff"/><stop offset="0.444" stop-color="#f4faff"/><stop offset="0.500" stop-color="#fffaff"/><stop offset="0.556" stop-color="#fff0f5"/><stop offset="0.611" stop-color="#ffe7ec"/><stop offset="0.667" stop-color="#ffdee3"/><stop offset="0.722" stop-color="#ffd6da"/><stop offset="0.778" stop-color="#ffced2"/><stop offset="0.833" stop-color="#ffc6cb"/><stop offset="0.889" stop-color="#ffbfc4"/><stop offset="0.944" stop-color="#ffb9bd"/><stop offset="1.000" stop-color="#ffb2b6"/></linearGradient><linearGradient id="xy27" x1="0" x2="1"><stop offset="0.000" stop-color="#a8f8ff"/><stop offset="0.056" stop-color="#b1f8ff"/><stop offset="0.111" stop-color="#baf8ff"/><stop offset="0.167" stop-color="#c3f8ff"/><stop offset="0.222" stop-color="#cdf8ff"/><stop offset="0.278" stop-color="#d6f8ff"/><stop offset="0.333" stop-color="#e0f8ff"/><stop offset="0.389" stop-color="#eaf8ff"/><stop offset="0.444" stop-color="#f4f8ff"/><stop offset="0.500" stop-color="#fef8ff"/><stop offset="0.556" stop-color="#ffeef5"/><stop offset="0.611" stop-color="#ffe5ec"/><stop offset="0.667" stop-color="#ffdce3"/><stop offset="0.722" stop-color="#ffd4db"/><stop offset="0.778" stop-color="#ffccd3"/><stop offset="0.833" stop-color="#ffc5cb"/><stop offset="0.889" stop-color="#ffbec4"/><stop offset="0.944" stop-color="#ffb7bd"/><stop offset="1.000" stop-color="#ffb1b7"/></linearGradient><linearGradient id="xy28" x1="0" x2="1"><stop offset="0.000" stop-color="#a8f6ff"/><stop offset="0.056" stop-color="#b1f6ff"/><stop offset="0.111" stop-color="#baf6ff"/><stop offset="0.167" stop-color="#c3f6ff"/><stop offset="0.222" stop-color="#cdf6ff"/><stop offset="0.278" stop-color="#d6f6ff"/><stop offset="0.333" stop-color="#e0f5ff"/><stop offset="0.389" stop-color="#eaf5ff"/><stop offset="0.444" stop-color="#f4f5ff"/><stop offset="0.500" stop-color="#fef5ff"/><stop offset="0.556" stop-color="#ffecf6"/><stop offset="0.611" stop-color="#ffe3ec"/><stop offset="0.667" stop-color="#ffdae3"/><stop offset="0.722" stop-color="#ffd2db"/><stop offset="0.778" stop-color="#ffcad3"/><stop offset="0.833" stop-color="#ffc3cb"/><stop offset="0.889" stop-color="#ffbcc4"/><stop offset="0.944" stop-color="#ffb6be"/><stop offset="1.000" stop-color="#ffafb7"/></linearGradient><linearGradient id="xy29" x1="0" x2="1"><stop offset="0.000" stop-color="#a8f4ff"/><stop offset="0.056" stop-color="#b1f4ff"/><stop offset="0.111" stop-color="#baf4ff"/><stop offset="0.167" stop-color="#c3f4ff"/><stop offset="0.222" stop-color="#cdf3ff"/><stop offset="0.278" stop-color="#d6f3ff"/><stop offset="0.333" stop-color="#e0f3ff"/><stop offset="0.389" stop-color="#eaf3ff"/><stop offset="0.444" stop-color="#f4f3ff"/><stop offset="0.500" stop-color="#fef3ff"/><stop offset="0.556" stop-color="#ffeaf6"/><stop offset="0.611" stop-color="#ffe1ec"/><stop offset="0.667" stop-color="#ffd8e3"/><stop offset="0.722" stop-color="#ffd0db"/><stop offset="0.778" stop-color="#ffc9d3"/><stop offset="0.833" stop-color="#ffc1cc"/><stop offset="0.889" stop-color="#ffbac5"/><stop offset="0.944" stop-color="#ffb4be"/><stop offset="1.000" stop-color="#ffaeb7"/></linearGradient><linearGradient id="xy30" x1="0" x2="1"><stop offset="0.000" stop-color="#a8f2ff"/><stop offset="0.056" stop-color="#b1f2ff"/><stop offset="0.111" stop-color="#baf1ff"/><stop offset="0.167" stop-color="#c3f1ff"/><stop offset="0.222" stop-color="#cdf1ff"/><stop offset="0.278" stop-color="#d6f1ff"/><stop offset="0.333" stop-color="#e0f1ff"/><stop offset="0.389" stop-color="#eaf1ff"/><stop offset="0.444" stop-color="#f4f1ff"/><stop offset="0.500" stop-color="#fef1ff"/><stop offset="0.556" stop-color="#ffe8f6"/><stop offset="0.611" stop-color="#ffdfed"/><stop offset="0.667" stop-color="#ffd6e4"/><stop offset="0.722" stop-color="#ffcedb"/><stop offset="0.778" stop-color="#ffc7d3"/><stop offset="0.833" stop-color="#ffc0cc"/><stop offset="0.889" stop-color="#ffb9c5"/><stop offset="0.944" stop-color="#ffb2be"/><stop offset="1.000" stop-color="#ffacb8"/></linearGradient><linearGradient id="xy31" x1="0" x2="1"><stop offset="0.000" stop-color="#a8f0ff"/><stop offset="0.056" stop-color="#b1efff"/><stop offset="0.111" stop-color="#baefff"/><stop offset="0.167" stop-color="#c3efff"/><stop offset="0.222" stop-color="#cdefff"/><stop offset="0.278" stop-color="#d6efff"/><stop offset="0.333" stop-color="#e0efff"/><stop offset="0.389" stop-color="#eaefff"/><stop offset="0.444" stop-color="#f4eeff"/><stop offset="0.500" stop-color="#feeeff"/><stop offset="0.556" stop-color="#ffe6f6"/><stop offset="0.611" stop-color="#ffdded"/><stop offset="0.667" stop-color="#ffd4e4"/><stop offset="0.722" stop-color="#ffcddc"/><stop offset="0.778" stop-color="#ffc5d4"/><stop offset="0.833" stop-color="#ffbecc"/><stop offset="0.889" stop-color="#ffb7c5"/><stop offset="0.944" stop-color="#ffb1be"/><stop offset="1.000" stop-color="#ffabb8"/></linearGradient><linearGradient id="xy32" x1="0" x2="1"><stop offset="0.000" stop-color="#a9edff"/><stop offset="0.056" stop-color="#b1edff"/><stop offset="0.111" stop-color="#baedff"/><stop offset="0.167" stop-color="#c4edff"/><stop offset="0.222" stop-color="#cdedff"/><stop offset="0.278" stop-color="#d6edff"/><stop offset="0.333" stop-color="#e0ecff"/><stop offset="0.389" stop-color="#eaecff"/><stop offset="0.444" stop-color="#f4ecff"/><stop offset="0.500" stop-color="#feecff"/><stop offset="0.556" stop-color="#ffe4f6"/><stop offset="0.611" stop-color="#ffdbed"/><stop offset="0.667" stop-color="#ffd3e4"/><stop offset="0.722" stop-color="#ffcbdc"/><stop offset="0.778" stop-color="#ffc3d4"/><stop offset="0.833" stop-color="#ffbccc"/><stop offset="0.889" stop-color="#ffb6c5"/><stop offset="0.944" stop-color="#ffafbf"/><stop offset="1.000" stop-color="#ffa9b8"/></linearGradient><linearGradient id="xy33" x1="0" x2="1"><stop offset="0.000" stop-color="#a9ebff"/><stop offset="0.056" stop-color="#b1ebff"/><stop offset="0.111" stop-color="#baebff"/><stop offset="0.167" stop-color="#c4ebff"/><stop offset="0.222" stop-color="#cdebff"/><stop offset="0.278" stop-color="#d6eaff"/><stop offset="0.333" stop-color="#e0eaff"/><stop offset="0.389" stop-color="#eaeaff"/><stop offset="0.444" stop-color="#f3eaff"/><stop offset="0.500" stop-color="#fdeaff"/><stop offset="0.556" stop-color="#ffe2f7"/><stop offset="0.611" stop-color="#ffd9ed"/><stop offset="0.667" stop-color="#ffd1e4"/><stop offset="0.722" stop-color="#ffc9dc"/><stop offset="0.778" stop-color="#ffc2d4"/><stop offset="0.833" stop-color="#ffbbcd"/><stop offset="0.889" stop-color="#ffb4c6"/><stop offset="0.944" stop-color="#ffaebf"/><stop offset="1.000" stop-color="#ffa8b9"/></linearGradient><linearGradient id="xy34" x1="0" x2="1"><stop offset="0.000" stop-color="#a9e9ff"/><stop offset="0.056" stop-color="#b2e9ff"/><stop offset="0.111" stop-color="#bbe9ff"/><stop offset="0.167" stop-color="#c4e9ff"/><stop offset="0.222" stop-color="#cde8ff"/><stop offset="0.278" stop-color="#d6e8ff"/><stop offset="0.333" stop-color="#e0e8ff"/><stop offset="0.389" stop-color="#e9e8ff"/><stop offset="0.444" stop-color="#f3e8ff"/><stop offset="0.500" stop-color="#fde7ff"/><stop offset="0.556" stop-color="#ffe0f7"/><stop offset="0.611" stop-color="#ffd7ed"/><stop offset="0.667" stop-color="#ffcfe5"/><stop offset="0.722" stop-color="#ffc7dc"/><stop offset="0.778" stop-color="#ffc0d4"/><stop offset="0.833" stop-color="#ffb9cd"/><stop offset="0.889" stop-color="#ffb2c6"/><stop offset="0.944" stop-color="#ffacbf"/><stop offset="1.000" stop-color="#ffa6b9"/></linearGradient><linearGradient id="xy35" x1="0" x2="1"><stop offset="0.000" stop-color="#a9e7ff"/><stop offset="0.056" stop-color="#b2e7ff"/><stop offset="0.111" stop-color="#bbe7ff"/><stop offset="0.167" stop-color="#c4e7ff"/><stop offset="0.222" stop-color="#cde6ff"/><stop offset="0.278" stop-color="#d6e6ff"/><stop offset="0.333" stop-color="#e0e6ff"/><stop offset="0.389" stop-color="#e9e6ff"/><stop offset="0.444" stop-color="#f3e5ff"/><stop offset="0.500" stop-color="#fde5ff"/><stop offset="0.556" stop-color="#ffdef7"/><stop offset="0.611" stop-color="#ffd5ee"/><stop offset="0.667" stop-color="#ffcde5"/><stop offset="0.722" stop-color="#ffc5dd"/><stop offset="0.778" stop-color="#ffbed5"/><stop offset="0.833" stop-color="#ffb7cd"/><stop offset="0.889" stop-color="#ffb1c6"/><stop offset="0.944" stop-color="#ffabc0"/><stop offset="1.000" stop-color="#ffa5b9"/></linearGradient><linearGradient id="xy36" x1="0" x2="1"><stop offset="0.000" stop-color="#a9e5ff"/><stop offset="0.056" stop-color="#b2e5ff"/><stop offset="0.111" stop-color="#bbe5ff"/><stop offset="0.167" stop-color="#c4e4ff"/><stop offset="0.222" stop-color="#cde4ff"/><stop offset="0.278" stop-color="#d6e4ff"/><stop offset="0.333" stop-color="#e0e4ff"/><stop offset="0.389" stop-color="#e9e3ff"/><stop offset="0.444" stop-color="#f3e3ff"/><stop offset="0.500" stop-color="#fde3ff"/><stop offset="0.556" stop-color="#ffdcf7"/><stop offset="0.611" stop-color="#ffd3ee"/><stop offset="0.667" stop-color="#ffcbe5"/><stop offset="0.722" stop-color="#ffc4dd"/><stop offset="0.778" stop-color="#ffbcd5"/><stop offset="0.833" stop-color="#ffb6ce"/><stop offset="0.889" stop-color="#ffafc7"/><stop offset="0.944" stop-color="#ffa9c0"/><stop offset="1.000" stop-color="#ffa3ba"/></linearGradient><linearGradient id="xy37" x1="0" x2="1"><stop offset="0.000" stop-color="#a9e3ff"/><stop offset="0.056" stop-color="#b2e3ff"/><stop offset="0.111" stop-color="#bbe3ff"/><stop offset="0.167" stop-color="#c4e2ff"/><stop offset="0.222" stop-color="#cde2ff"/><stop offset="0.278" stop-color="#d6e2ff"/><stop offset="0.333" stop-color="#e0e2ff"/><stop offset="0.389" stop-color="#e9e1ff"/><stop offset="0.444" stop-color="#f3e1ff"/><stop offset="0.500" stop-color="#fde1ff"/><stop offset="0.556" stop-color="#ffdaf7"/><stop offset="0.611" stop-color="#ffd1ee"/><stop offset="0.667" stop-color="#ffc9e5"/><stop offset="0.722" stop-color="#ffc2dd"/><stop offset="0.778" stop-color="#ffbbd5"/><stop offset="0.833" stop-color="#ffb4ce"/><stop offset="0.889" stop-color="#ffaec7"/><stop offset="0.944" stop-color="#ffa8c0"/><stop offset="1.000" stop-color="#ffa2ba"/></linearGradient><linearGradient id="xy38" x1="0" x2="1"><stop offset="0.000" stop-color="#a9e1ff"/><stop offset="0.056" stop-color="#b2e1ff"/><stop offset="0.111" stop-color="#bbe0ff"/><stop offset="0.167" stop-color="#c4e0ff"/><stop offset="0.222" stop-color="#cde0ff"/><stop offset="0.278" stop-color="#d6e0ff"/><stop offset="0.333" stop-color="#e0dfff"/><stop offset="0.389" stop-color="#e9dfff"/><stop offset="0.444" stop-color="#f3dfff"/><stop offset="0.500" stop-color="#fddfff"/><stop offset="0.556" stop-color="#ffd8f8"/><stop offset="0.611" stop-color="#ffcfee"/><stop offset="0.667" stop-color="#ffc8e6"/><stop offset="0.722" stop-color="#ffc0dd"/><stop offset="0.778" stop-color="#ffb9d5"/><stop offset="0.833" stop-color="#ffb2ce"/><stop offset="0.889" stop-color="#ffacc7"/><stop offset="0.944" stop-color="#ffa6c0"/><stop offset="1.000" stop-color="#ffa0ba"/></linearGradient><linearGradient id="xy39" x1="0" x2="1"><stop offset="0.000" stop-color="#a9dfff"/><stop offset="0.056" stop-color="#b2dfff"/><stop offset="0.111" stop-color="#bbdeff"/><stop offset="0.167" stop-color="#c4deff"/><stop offset="0.222" stop-color="#cddeff"/><stop offset="0.278" stop-color="#d6deff"/><stop offset="0.333" stop-color="#e0ddff"/><stop offset="0.389" stop-color="#e9ddff"/><stop offset="0.444" stop-color="#f3ddff"/><stop offset="0.500" stop-color="#fddcff"/><stop offset="0.556" stop-color="#ffd6f8"/><stop offset="0.611" stop-color="#ffceee"/><stop offset="0.667" stop-color="#ffc6e6"/><stop offset="0.722" stop-color="#ffbede"/><stop offset="0.778" stop-color="#ffb7d6"/><stop offset="0.833" stop-color="#ffb1ce"/><stop offset="0.889" stop-color="#ffabc7"/><stop offset="0.944" stop-color="#ffa5c1"/><stop offset="1.000" stop-color="#ff9fba"/></linearGradient><linearGradient id="xy40" x1="0" x2="1"><stop offset="0.000" stop-color="#aaddff"/><stop offset="0.056" stop-color="#b2ddff"/><stop offset="0.111" stop-color="#bbdcff"/><stop offset="0.167" stop-color="#c4dcff"/><stop offset="0.222" stop-color="#cddcff"/><stop offset="0.278" stop-color="#d6dbff"/><stop offset="0.333" stop-color="#dfdbff"/><stop offset="0.389" stop-color="#e9dbff"/><stop offset="0.444" stop-color="#f3dbff"/><stop offset="0.500" stop-color="#fcdaff"/><stop offset="0.556" stop-color="#ffd4f8"/><stop offset="0.611" stop-color="#ffccef"/><stop offset="0.667" stop-color="#ffc4e6"/><stop offset="0.722" stop-color="#ffbdde"/><stop offset="0.778" stop-color="#ffb6d6"/><stop offset="0.833" stop-color="#ffafcf"/><stop offset="0.889" stop-color="#ffa9c8"/><stop offset="0.944" stop-color="#ffa3c1"/><stop offset="1.000" stop-color="#ff9dbb"/></linearGradient><linearGradient id="xy41" x1="0" x2="1"><stop offset="0.000" stop-color="#aadbff"/><stop offset="0.056" stop-color="#b2dbff"/><stop offset="0.111" stop-color="#bbdaff"/><stop offset="0.167" stop-color="#c4daff"/><stop offset="0.222" stop-color="#cddaff"/><stop offset="0.278" stop-color="#d6d9ff"/><stop offset="0.333" stop-color="#dfd9ff"/><stop offset="0.389" stop-color="#e9d9ff"/><stop offset="0.444" stop-color="#f2d8ff"/><stop offset="0.500" stop-color="#fcd8ff"/><stop offset="0.556" stop-color="#ffd2f8"/><stop offset="0.611" stop-color="#ffcaef"/><stop offset="0.667" stop-color="#ffc2e6"/><stop offset="0.722" stop-color="#ffbbde"/><stop offset="0.778" stop-color="#ffb4d6"/><stop offset="0.833" stop-color="#ffaecf"/><stop offset="0.889" stop-color="#ffa7c8"/><stop offset="0.944" stop-color="#ffa2c1"/><stop offset="1.000" stop-color="#ff9cbb"/></linearGradient><linearGradient id="xy42" x1="0" x2="1"><stop offset="0.000" stop-color="#aad9ff"/><stop offset="0.056" stop-color="#b2d9ff"/><stop offset="0.111" stop-color="#bbd8ff"/><stop offset="0.167" stop-color="#c4d8ff"/><stop offset="0.222" stop-color="#cdd8ff"/><stop offset="0.278" stop-color="#d6d7ff"/><stop offset="0.333" stop-color="#dfd7ff"/><stop offset="0.389" stop-color="#e9d7ff"/><stop offset="0.444" stop-color="#f2d6ff"/><stop offset="0.500" stop-color="#fcd6ff"/><stop offset="0.556" stop-color="#ffd0f8"/><stop offset="0.611" stop-color="#ffc8ef"/><stop offset="0.667" stop-color="#ffc0e6"/><stop offset="0.722" stop-color="#ffb9de"/><stop offset="0.778" stop-color="#ffb2d7"/><stop offset="0.833" stop-color="#ffaccf"/><stop offset="0.889" stop-color="#ffa6c8"/><stop offset="0.944" stop-color="#ffa0c2"/><stop offset="1.000" stop-color="#ff9bbb"/></linearGradient><linearGradient id="xy43" x1="0" x2="1"><stop offset="0.000" stop-color="#aad7ff"/><stop offset="0.056" stop-color="#b3d7ff"/><stop offset="0.111" stop-color="#bbd6ff"/><stop offset="0.167" stop-color="#c4d6ff"/><stop offset="0.222" stop-color="#cdd6ff"/><stop offset="0.278" stop-color="#d6d5ff"/><stop offset="0.333" stop-color="#dfd5ff"/><stop offset="0.389" stop-color="#e9d5ff"/><stop offset="0.444" stop-color="#f2d4ff"/><stop offset="0.500" stop-color="#fcd4ff"/><stop offset="0.556" stop-color="#ffcef8"/><stop offset="0.611" stop-color="#ffc6ef"/><stop offset="0.667" stop-color="#ffbfe7"/><stop offset="0.722" stop-color="#ffb8de"/><stop offset="0.778" stop-color="#ffb1d7"/><stop offset="0.833" stop-color="#ffaacf"/><stop offset="0.889" stop-color="#ffa4c8"/><stop offset="0.944" stop-color="#ff9fc2"/><stop offset="1.000" stop-color="#ff99bc"/></linearGradient><linearGradient id="xy44" x1="0" x2="1"><stop offset="0.000" stop-color="#aad5ff"/><stop offset="0.056" stop-color="#b3d5ff"/><stop offset="0.111" stop-color="#bbd4ff"/><stop offset="0.167" stop-color="#c4d4ff"/><stop offset="0.222" stop-color="#cdd4ff"/><stop offset="0.278" stop-color="#d6d3ff"/><stop offset="0.333" stop-color="#dfd3ff"/><stop offset="0.389" stop-color="#e9d3ff"/><stop offset="0.444" stop-color="#f2d2ff"/><stop offset="0.500" stop-color="#fcd2ff"/><stop offset="0.556" stop-color="#ffccf9"/><stop offset="0.611" stop-color="#ffc4ef"/><stop offset="0.667" stop-color="#ffbde7"/><stop offset="0.722" stop-color="#ffb6df"/><stop offset="0.778" stop-color="#ffafd7"/><stop offset="0.833" stop-color="#ffa9d0"/><stop offset="0.889" stop-color="#ffa3c9"/><stop offset="0.944" stop-color="#ff9dc2"/><stop offset="1.000" stop-color="#ff98bc"/></linearGradient><linearGradient id="xy45" x1="0" x2="1"><stop offset="0.000" stop-color="#aad3ff"/><stop offset="0.056" stop-color="#b3d3ff"/><stop offset="0.111" stop-color="#bbd2ff"/><stop offset="0.167" stop-color="#c4d2ff"/><stop offset="0.222" stop-color="#cdd2ff"/><stop offset="0.278" stop-color="#d6d1ff"/><stop offset="0.333" stop-color="#dfd1ff"/><stop offset="0.389" stop-color="#e9d0ff"/><stop offset="0.444" stop-color="#f2d0ff"/><stop offset="0.500" stop-color="#fcd0ff"/><stop offset="0.556" stop-color="#ffcaf9"/><stop offset="0.611" stop-color="#ffc2f0"/><stop offset="0.667" stop-color="#ffbbe7"/><stop offset="0.722" stop-color="#ffb4df"/><stop offset="0.778" stop-color="#ffaed7"/><stop offset="0.833" stop-color="#ffa7d0"/><stop offset="0.889" stop-color="#ffa1c9"/><stop offset="0.944" stop-color="#ff9cc2"/><stop offset="1.000" stop-color="#ff96bc"/></linearGradient><linearGradient id="xy46" x1="0" x2="1"><stop offset="0.000" stop-color="#aad1ff"/><stop offset="0.056" stop-color="#b3d1ff"/><stop offset="0.111" stop-color="#bbd0ff"/><stop offset="0.167" stop-color="#c4d0ff"/><stop offset="0.222" stop-color="#cdd0ff"/><stop offset="0.278" stop-color="#d6cfff"/><stop offset="0.333" stop-color="#dfcfff"/><stop offset="0.389" stop-color="#e8ceff"/><stop offset="0.444" stop-color="#f2ceff"/><stop offset="0.500" stop-color="#fbceff"/><stop offset="0.556" stop-color="#ffc8f9"/><stop offset="0.611" stop-color="#ffc1f0"/><stop offset="0.667" stop-color="#ffb9e7"/><stop offset="0.722" stop-color="#ffb2df"/><stop offset="0.778" stop-color="#ffacd7"/><stop offset="0.833" stop-color="#ffa6d0"/><stop offset="0.889" stop-color="#ffa0c9"/><stop offset="0.944" stop-color="#ff9ac3"/><stop offset="1.000" stop-color="#ff95bc"/></linearGradient><linearGradient id="xy47" x1="0" x2="1"><stop offset="0.000" stop-color="#abcfff"/><stop offset="0.056" stop-color="#b3cfff"/><stop offset="0.111" stop-color="#bcceff"/><stop offset="0.167" stop-color="#c4ceff"/><stop offset="0.222" stop-color="#cdceff"/><stop offset="0.278" stop-color="#d6cdff"/><stop offset="0.333" stop-color="#dfcdff"/><stop offset="0.389" stop-color="#e8ccff"/><stop offset="0.444" stop-color="#f2ccff"/><stop offset="0.500" stop-color="#fbccff"/><stop offset="0.556" stop-color="#ffc6f9"/><stop offset="0.611" stop-color="#ffbff0"/><stop offset="0.667" stop-color="#ffb8e7"/><stop offset="0.722" stop-color="#ffb1df"/><stop offset="0.778" stop-color="#ffaad8"/><stop offset="0.833" stop-color="#ffa4d0"/><stop offset="0.889" stop-color="#ff9eca"/><stop offset="0.944" stop-color="#ff99c3"/><stop offset="1.000" stop-color="#ff94bd"/></linearGradient><linearGradient id="xy48" x1="0" x2="1"><stop offset="0.000" stop-color="#abcdff"/><stop offset="0.056" stop-color="#b3cdff"/><stop offset="0.111" stop-color="#bcccff"/><stop offset="0.167" stop-color="#c4ccff"/><stop offset="0.222" stop-color="#cdccff"/><stop offset="0.278" stop-color="#d6cbff"/><stop offset="0.333" stop-color="#dfcbff"/><stop offset="0.389" stop-color="#e8caff"/><stop offset="0.444" stop-color="#f2caff"/><stop offset="0.500" stop-color="#fbcaff"/><stop offset="0.556" stop-color="#ffc5f9"/><stop offset="0.611" stop-color="#ffbdf0"/><stop offset="0.667" stop-color="#ffb6e8"/><stop offset="0.722" stop-color="#ffafe0"/><stop offset="0.778" stop-color="#ffa9d8"/><stop offset="0.833" stop-color="#ffa3d1"/><stop offset="0.889" stop-color="#ff9dca"/><stop offset="0.944" stop-color="#ff97c3"/><stop offset="1.000" stop-color="#ff92bd"/></linearGradient></defs>
<rect x="639.8" y="678.5" width="338.7" height="4.60" fill="url(#xy0)"/><rect x="639.8" y="682.5" width="338.7" height="4.60" fill="url(#xy1)"/><rect x="639.8" y="686.5" width="338.7" height="4.60" fill="url(#xy2)"/><rect x="639.8" y="690.5" width="338.7" height="4.60" fill="url(#xy3)"/><rect x="639.8" y="694.5" width="338.7" height="4.60" fill="url(#xy4)"/><rect x="639.8" y="698.5" width="338.7" height="4.60" fill="url(#xy5)"/><rect x="639.8" y="702.5" width="338.7" height="4.60" fill="url(#xy6)"/><rect x="639.8" y="706.5" width="338.7" height="4.60" fill="url(#xy7)"/><rect x="639.8" y="710.5" width="338.7" height="4.60" fill="url(#xy8)"/><rect x="639.8" y="714.5" width="338.7" height="4.60" fill="url(#xy9)"/><rect x="639.8" y="718.5" width="338.7" height="4.60" fill="url(#xy10)"/><rect x="639.8" y="722.5" width="338.7" height="4.60" fill="url(#xy11)"/><rect x="639.8" y="726.5" width="338.7" height="4.60" fill="url(#xy12)"/><rect x="639.8" y="730.5" width="338.7" height="4.60" fill="url(#xy13)"/><rect x="639.8" y="734.5" width="338.7" height="4.60" fill="url(#xy14)"/><rect x="639.8" y="738.5" width="338.7" height="4.60" fill="url(#xy15)"/><rect x="639.8" y="742.5" width="338.7" height="4.60" fill="url(#xy16)"/><rect x="639.8" y="746.5" width="338.7" height="4.60" fill="url(#xy17)"/><rect x="639.8" y="750.5" width="338.7" height="4.60" fill="url(#xy18)"/><rect x="639.8" y="754.5" width="338.7" height="4.60" fill="url(#xy19)"/><rect x="639.8" y="758.5" width="338.7" height="4.60" fill="url(#xy20)"/><rect x="639.8" y="762.5" width="338.7" height="4.60" fill="url(#xy21)"/><rect x="639.8" y="766.5" width="338.7" height="4.60" fill="url(#xy22)"/><rect x="639.8" y="770.5" width="338.7" height="4.60" fill="url(#xy23)"/><rect x="639.8" y="774.5" width="338.7" height="4.60" fill="url(#xy24)"/><rect x="639.8" y="778.5" width="338.7" height="4.60" fill="url(#xy25)"/><rect x="639.8" y="782.5" width="338.7" height="4.60" fill="url(#xy26)"/><rect x="639.8" y="786.5" width="338.7" height="4.60" fill="url(#xy27)"/><rect x="639.8" y="790.5" width="338.7" height="4.60" fill="url(#xy28)"/><rect x="639.8" y="794.5" width="338.7" height="4.60" fill="url(#xy29)"/><rect x="639.8" y="798.5" width="338.7" height="4.60" fill="url(#xy30)"/><rect x="639.8" y="802.5" width="338.7" height="4.60" fill="url(#xy31)"/><rect x="639.8" y="806.5" width="338.7" height="4.60" fill="url(#xy32)"/><rect x="639.8" y="810.5" width="338.7" height="4.60" fill="url(#xy33)"/><rect x="639.8" y="814.5" width="338.7" height="4.60" fill="url(#xy34)"/><rect x="639.8" y="818.5" width="338.7" height="4.60" fill="url(#xy35)"/><rect x="639.8" y="822.5" width="338.7" height="4.60" fill="url(#xy36)"/><rect x="639.8" y="826.5" width="338.7" height="4.60" fill="url(#xy37)"/><rect x="639.8" y="830.5" width="338.7" height="4.60" fill="url(#xy38)"/><rect x="639.8" y="834.5" width="338.7" height="4.60" fill="url(#xy39)"/><rect x="639.8" y="838.5" width="338.7" height="4.60" fill="url(#xy40)"/><rect x="639.8" y="842.5" width="338.7" height="4.60" fill="url(#xy41)"/><rect x="639.8" y="846.5" width="338.7" height="4.60" fill="url(#xy42)"/><rect x="639.8" y="850.5" width="338.7" height="4.60" fill="url(#xy43)"/><rect x="639.8" y="854.5" width="338.7" height="4.60" fill="url(#xy44)"/><rect x="639.8" y="858.5" width="338.7" height="4.60" fill="url(#xy45)"/><rect x="639.8" y="862.5" width="338.7" height="4.60" fill="url(#xy46)"/><rect x="639.8" y="866.5" width="338.7" height="4.60" fill="url(#xy47)"/><rect x="639.8" y="870.5" width="338.7" height="3.40" fill="url(#xy48)"/>
<circle cx="828.2" cy="742.4" r="4.7" fill="#b4b4b4" stroke="#222" stroke-width="1.2"/>
<circle cx="831.8" cy="746.6" r="4.7" fill="#ffffff" stroke="#111" stroke-width="1.2"/>
<rect x="801.5" y="768.8" width="13.5" height="13.5" fill="none" stroke="#000" stroke-width="2.4"/>
<rect x="996" y="661.3" width="653" height="224.7" fill="#000"/>
<rect x="997.5" y="662.8" width="650" height="221.7" fill="#333333"/>
<rect x="997.5" y="679.5" width="633" height="16" fill="#151515"/>
<rect x="997.5" y="662.8" width="633" height="16.7" fill="#333333"/>
<defs><clipPath id="tclip"><rect x="997.5" y="695.5" width="633" height="170.5"/></clipPath></defs>
<g clip-path="url(#tclip)">
<rect x="997.5" y="695.5" width="633" height="31.1" fill="#474747"/>
<text x="1010.49" y="718.60" font-size="18.90" font-weight="bold" textLength="63.36" lengthAdjust="spacingAndGlyphs" fill="#f4f4f4">x: CIE31</text>
<text x="1093.85" y="718.60" font-size="19.19" textLength="51.08" lengthAdjust="spacingAndGlyphs" fill="#f0f0f0">0,3158</text>
<text x="1171.65" y="718.60" font-size="19.19" textLength="51.05" lengthAdjust="spacingAndGlyphs" fill="#f0f0f0">0,6535</text>
<text x="1249.45" y="718.60" font-size="19.19" textLength="51.20" lengthAdjust="spacingAndGlyphs" fill="#f0f0f0">0,3007</text>
<text x="1327.25" y="718.60" font-size="19.19" textLength="51.00" lengthAdjust="spacingAndGlyphs" fill="#f0f0f0">0,1450</text>
<text x="1405.05" y="718.60" font-size="19.19" textLength="51.05" lengthAdjust="spacingAndGlyphs" fill="#f0f0f0">0,2205</text>
<text x="1482.85" y="718.60" font-size="19.19" textLength="51.09" lengthAdjust="spacingAndGlyphs" fill="#f0f0f0">0,3203</text>
<text x="1560.65" y="718.60" font-size="19.19" textLength="51.20" lengthAdjust="spacingAndGlyphs" fill="#f0f0f0">0,4232</text>
<rect x="997.5" y="726.6" width="633" height="31.1" fill="#7e7e7e"/>
<text x="1010.47" y="749.70" font-size="18.90" font-weight="bold" textLength="63.37" lengthAdjust="spacingAndGlyphs" fill="#f4f4f4">y: CIE31</text>
<text x="1093.85" y="749.70" font-size="19.19" textLength="51.15" lengthAdjust="spacingAndGlyphs" fill="#f0f0f0">0,3369</text>
<text x="1171.65" y="749.70" font-size="19.19" textLength="50.84" lengthAdjust="spacingAndGlyphs" fill="#f0f0f0">0,3254</text>
<text x="1249.45" y="749.70" font-size="19.19" textLength="51.00" lengthAdjust="spacingAndGlyphs" fill="#f0f0f0">0,6150</text>
<text x="1327.25" y="749.70" font-size="19.19" textLength="51.17" lengthAdjust="spacingAndGlyphs" fill="#f0f0f0">0,0621</text>
<text x="1405.05" y="749.70" font-size="19.19" textLength="51.09" lengthAdjust="spacingAndGlyphs" fill="#f0f0f0">0,3473</text>
<text x="1482.85" y="749.70" font-size="19.19" textLength="51.05" lengthAdjust="spacingAndGlyphs" fill="#f0f0f0">0,1515</text>
<text x="1560.65" y="749.70" font-size="19.19" textLength="51.09" lengthAdjust="spacingAndGlyphs" fill="#f0f0f0">0,5183</text>
<rect x="997.5" y="757.7" width="633" height="31.1" fill="#434343"/>
<text x="1010.36" y="780.80" font-size="18.90" font-weight="bold" textLength="9.37" lengthAdjust="spacingAndGlyphs" fill="#f4f4f4">Y</text>
<text x="1093.23" y="780.80" font-size="19.19" textLength="69.39" lengthAdjust="spacingAndGlyphs" fill="#f0f0f0">191,2838</text>
<text x="1171.86" y="780.80" font-size="19.19" textLength="68.58" lengthAdjust="spacingAndGlyphs" fill="#f0f0f0">41,4720</text>
<text x="1248.83" y="780.80" font-size="19.19" textLength="69.40" lengthAdjust="spacingAndGlyphs" fill="#f0f0f0">149,3126</text>
<text x="1326.43" y="780.80" font-size="19.19" textLength="69.68" lengthAdjust="spacingAndGlyphs" fill="#f0f0f0">14,5935</text>
<text x="1404.43" y="780.80" font-size="19.19" textLength="69.39" lengthAdjust="spacingAndGlyphs" fill="#f0f0f0">159,9478</text>
<text x="1482.73" y="780.80" font-size="19.19" textLength="69.13" lengthAdjust="spacingAndGlyphs" fill="#f0f0f0">54,7842</text>
<text x="1560.03" y="780.80" font-size="19.19" textLength="69.39" lengthAdjust="spacingAndGlyphs" fill="#f0f0f0">187,1088</text>
<rect x="997.5" y="788.8" width="633" height="31.1" fill="#7e7e7e"/>
<text x="1010.41" y="811.90" font-size="18.90" font-weight="bold" textLength="66.86" lengthAdjust="spacingAndGlyphs" fill="#f4f4f4">Target Y</text>
<text x="1093.23" y="811.90" font-size="19.19" textLength="69.32" lengthAdjust="spacingAndGlyphs" fill="#f0f0f0">174,8090</text>
<text x="1171.57" y="811.90" font-size="19.19" textLength="69.09" lengthAdjust="spacingAndGlyphs" fill="#f0f0f0">37,1742</text>
<text x="1248.83" y="811.90" font-size="19.19" textLength="69.48" lengthAdjust="spacingAndGlyphs" fill="#f0f0f0">125,0161</text>
<text x="1326.43" y="811.90" font-size="19.19" textLength="69.84" lengthAdjust="spacingAndGlyphs" fill="#f0f0f0">12,6187</text>
<text x="1404.43" y="811.90" font-size="19.19" textLength="69.39" lengthAdjust="spacingAndGlyphs" fill="#f0f0f0">137,6348</text>
<text x="1483.06" y="811.90" font-size="19.19" textLength="68.74" lengthAdjust="spacingAndGlyphs" fill="#f0f0f0">49,7929</text>
<text x="1560.03" y="811.90" font-size="19.19" textLength="69.40" lengthAdjust="spacingAndGlyphs" fill="#f0f0f0">162,1903</text>
<rect x="997.5" y="819.9" width="633" height="31.1" fill="#434343"/>
<text x="1009.90" y="843.00" font-size="18.90" font-weight="bold" textLength="66.80" lengthAdjust="spacingAndGlyphs" fill="#f4f4f4">ΔE 2000</text>
<text x="1094.12" y="843.00" font-size="19.19" textLength="50.56" lengthAdjust="spacingAndGlyphs" fill="#f0f0f0">4,2634</text>
<text x="1171.46" y="843.00" font-size="19.19" textLength="51.03" lengthAdjust="spacingAndGlyphs" fill="#f0f0f0">2,6124</text>
<text x="1249.72" y="843.00" font-size="19.19" textLength="50.81" lengthAdjust="spacingAndGlyphs" fill="#f0f0f0">4,4586</text>
<text x="1327.06" y="843.00" font-size="19.19" textLength="51.25" lengthAdjust="spacingAndGlyphs" fill="#f0f0f0">2,2895</text>
<text x="1405.03" y="843.00" font-size="19.19" textLength="50.85" lengthAdjust="spacingAndGlyphs" fill="#f0f0f0">5,9664</text>
<text x="1482.66" y="843.00" font-size="19.19" textLength="51.28" lengthAdjust="spacingAndGlyphs" fill="#f0f0f0">2,1653</text>
<text x="1560.92" y="843.00" font-size="19.19" textLength="50.78" lengthAdjust="spacingAndGlyphs" fill="#f0f0f0">4,0005</text>
<rect x="997.5" y="851.0" width="633" height="31.1" fill="#7e7e7e"/>
<text x="1009.93" y="874.10" font-size="18.90" font-weight="bold" textLength="53.03" lengthAdjust="spacingAndGlyphs" fill="#f4f4f4">ΔE ITP</text>
<text x="1093.64" y="874.10" font-size="19.19" textLength="51.30" lengthAdjust="spacingAndGlyphs" fill="#f0f0f0">7,2806</text>
<text x="1170.83" y="874.10" font-size="19.19" textLength="69.81" lengthAdjust="spacingAndGlyphs" fill="#f0f0f0">16,6071</text>
<text x="1248.63" y="874.10" font-size="19.19" textLength="69.81" lengthAdjust="spacingAndGlyphs" fill="#f0f0f0">15,3811</text>
<text x="1326.43" y="874.10" font-size="19.19" textLength="69.72" lengthAdjust="spacingAndGlyphs" fill="#f0f0f0">15,2876</text>
<text x="1404.23" y="874.10" font-size="19.19" textLength="69.72" lengthAdjust="spacingAndGlyphs" fill="#f0f0f0">13,1763</text>
<text x="1482.64" y="874.10" font-size="19.19" textLength="51.04" lengthAdjust="spacingAndGlyphs" fill="#f0f0f0">7,7704</text>
<text x="1559.83" y="874.10" font-size="19.19" textLength="69.62" lengthAdjust="spacingAndGlyphs" fill="#f0f0f0">14,7420</text>
</g>
<text x="1107.93" y="685.40" font-size="17.73" textLength="42.82" lengthAdjust="spacingAndGlyphs" fill="#f0f0f0">White</text>
<text x="1192.75" y="685.40" font-size="17.73" textLength="27.93" lengthAdjust="spacingAndGlyphs" fill="#f0f0f0">Red</text>
<text x="1262.61" y="685.40" font-size="17.73" textLength="43.92" lengthAdjust="spacingAndGlyphs" fill="#f0f0f0">Green</text>
<text x="1345.99" y="685.40" font-size="17.73" textLength="31.92" lengthAdjust="spacingAndGlyphs" fill="#f0f0f0">Blue</text>
<text x="1422.54" y="685.40" font-size="17.73" textLength="35.14" lengthAdjust="spacingAndGlyphs" fill="#f0f0f0">Cyan</text>
<text x="1485.68" y="685.40" font-size="17.73" textLength="62.82" lengthAdjust="spacingAndGlyphs" fill="#f0f0f0">Magenta</text>
<text x="1573.17" y="685.40" font-size="17.73" textLength="44.70" lengthAdjust="spacingAndGlyphs" fill="#f0f0f0">Yellow</text>
<rect x="1631.5" y="695.5" width="16" height="171" fill="#4a4a4a"/>
<rect x="1633" y="697.5" width="13.5" height="16" rx="3" fill="#7c7c7c" stroke="#8a8a8a" stroke-width="1"/>
<path d="M1635.5 710 L1639.8 704.2 L1644 710 Z" fill="#3a3a3a"/>
<rect x="1633.5" y="718" width="12.5" height="104" rx="6" fill="#3c3c3c"/>
<rect x="1633" y="849" width="13.5" height="16" rx="3" fill="#7c7c7c" stroke="#8a8a8a" stroke-width="1"/>
<path d="M1635.5 853 L1639.8 858.8 L1644 853 Z" fill="#3a3a3a"/>
<rect x="997.5" y="866" width="633" height="19.5" fill="#555"/>
<rect x="999" y="868" width="14" height="16" rx="3" fill="#777"/>
<path d="M1002.5 876 L1008.5 871.5 V880.5 Z" fill="#3a3a3a"/>
<rect x="1017" y="868" width="526" height="16" rx="8" fill="#3c3c3c"/>
<rect x="1615.5" y="867.6" width="15" height="15.5" rx="3" fill="#777"/>
<path d="M1626 875.3 L1620 870.8 V879.8 Z" fill="#3a3a3a"/>
<rect x="1631.5" y="866" width="16" height="19.5" fill="#333"/>
<defs><linearGradient id="bbtn" x1="0" x2="0" y1="0" y2="1"><stop offset="0" stop-color="#b0b0b0"/><stop offset="0.5" stop-color="#8a8a8a"/><stop offset="1" stop-color="#5e5e5e"/></linearGradient><linearGradient id="swsh" x1="0" x2="0" y1="0" y2="1"><stop offset="0" stop-color="rgba(0,0,0,0.35)"/><stop offset="0.07" stop-color="rgba(0,0,0,0.0)"/></linearGradient><linearGradient id="bsel" x1="0" x2="0" y1="0" y2="1"><stop offset="0" stop-color="#1a1a1a"/><stop offset="0.1" stop-color="#2a2a2a"/><stop offset="1" stop-color="#343434"/></linearGradient></defs>
<rect x="2.4" y="929.6" width="155.5" height="74.9" rx="4.5" fill="url(#bbtn)"/>
<rect x="8.6" y="936" width="142.8" height="44.8" rx="5" fill="#c0c0c0" stroke="rgba(0,0,0,0.25)" stroke-width="1.2"/>
<rect x="8.6" y="936" width="142.8" height="44.8" rx="5" fill="url(#swsh)"/>
<text x="63.20" y="999.60" font-size="12.65" font-weight="bold" fill="#262626">White</text>
<rect x="160.4" y="929.6" width="155.5" height="74.9" rx="4.5" fill="url(#bbtn)"/>
<rect x="166.6" y="936" width="142.8" height="44.8" rx="5" fill="#c00000" stroke="rgba(0,0,0,0.25)" stroke-width="1.2"/>
<rect x="166.6" y="936" width="142.8" height="44.8" rx="5" fill="url(#swsh)"/>
<text x="226.25" y="999.60" font-size="12.65" font-weight="bold" fill="#262626">Red</text>
<rect x="318.4" y="929.6" width="155.5" height="74.9" rx="4.5" fill="url(#bbtn)"/>
<rect x="324.6" y="936" width="142.8" height="44.8" rx="5" fill="#00c000" stroke="rgba(0,0,0,0.25)" stroke-width="1.2"/>
<rect x="324.6" y="936" width="142.8" height="44.8" rx="5" fill="url(#swsh)"/>
<text x="378.06" y="999.60" font-size="12.65" font-weight="bold" fill="#262626">Green</text>
<rect x="476.4" y="929.6" width="155.5" height="74.9" rx="4.5" fill="url(#bbtn)"/>
<rect x="482.6" y="936" width="142.8" height="44.8" rx="5" fill="#0000c0" stroke="rgba(0,0,0,0.25)" stroke-width="1.2"/>
<rect x="482.6" y="936" width="142.8" height="44.8" rx="5" fill="url(#swsh)"/>
<text x="540.29" y="999.60" font-size="12.65" font-weight="bold" fill="#262626">Blue</text>
<rect x="634.4" y="929.6" width="155.5" height="74.9" rx="4.5" fill="url(#bbtn)"/>
<rect x="640.6" y="936" width="142.8" height="44.8" rx="5" fill="#00c0c0" stroke="rgba(0,0,0,0.25)" stroke-width="1.2"/>
<rect x="640.6" y="936" width="142.8" height="44.8" rx="5" fill="url(#swsh)"/>
<text x="696.87" y="999.60" font-size="12.65" font-weight="bold" fill="#262626">Cyan</text>
<rect x="792.4" y="929.6" width="155.5" height="74.9" rx="4.5" fill="url(#bbtn)"/>
<rect x="798.6" y="936" width="142.8" height="44.8" rx="5" fill="#c000c0" stroke="rgba(0,0,0,0.25)" stroke-width="1.2"/>
<rect x="798.6" y="936" width="142.8" height="44.8" rx="5" fill="url(#swsh)"/>
<text x="844.09" y="999.60" font-size="12.65" font-weight="bold" fill="#262626">Magenta</text>
<rect x="950.4" y="929.6" width="155.5" height="74.9" rx="4.5" fill="url(#bbtn)"/>
<rect x="956.6" y="936" width="142.8" height="44.8" rx="5" fill="#c0c000" stroke="rgba(0,0,0,0.25)" stroke-width="1.2"/>
<rect x="956.6" y="936" width="142.8" height="44.8" rx="5" fill="url(#swsh)"/>
<text x="1008.05" y="999.60" font-size="12.65" font-weight="bold" fill="#262626">Yellow</text>
<rect x="1108.4" y="929.6" width="155.5" height="74.9" rx="4.5" fill="url(#bsel)"/>
<rect x="1114.6" y="936" width="142.8" height="44.8" rx="5" fill="#ffffff" stroke="#ddd" stroke-width="1.2"/>
<rect x="1114.6" y="936" width="142.8" height="44.8" rx="5" fill="url(#swsh)"/>
<text x="1169.29" y="999.60" font-size="12.65" font-weight="bold" fill="#f4f4f4">100W</text>
<defs><linearGradient id="cbtn" x1="0" x2="0" y1="0" y2="1"><stop offset="0" stop-color="#b4b4b4"/><stop offset="1" stop-color="#6a6a6a"/></linearGradient><linearGradient id="cbtnd" x1="0" x2="0" y1="0" y2="1"><stop offset="0" stop-color="#8c8c8c"/><stop offset="1" stop-color="#4c4c4c"/></linearGradient><linearGradient id="nbtn" x1="0" x2="0" y1="0" y2="1"><stop offset="0" stop-color="#bdbdbd"/><stop offset="1" stop-color="#858585"/></linearGradient><linearGradient id="icirc" x1="0" x2="0" y1="0" y2="1"><stop offset="0" stop-color="#7a7a7a"/><stop offset="1" stop-color="#a8a8a8"/></linearGradient><linearGradient id="icircd" x1="0" x2="0" y1="0" y2="1"><stop offset="0" stop-color="#5a5a5a"/><stop offset="1" stop-color="#7a7a7a"/></linearGradient></defs>
<rect x="1267" y="929.4" width="60.3" height="80" rx="5" fill="url(#cbtn)"/>
<line x1="1267" y1="952" x2="1327.3" y2="952" stroke="#444" stroke-width="1.2"/>
<circle cx="1297.3" cy="940.5" r="9.3" fill="url(#icirc)"/>
<path d="M1291.8 943.2 L1297.3 937.6 L1302.8 943.2 Z" fill="#2e2e2e"/>
<rect x="1278.5" y="961" width="37" height="36.5" rx="5" fill="#9c9c9c" stroke="#1c1c1c" stroke-width="2.6"/>
<rect x="1289" y="971" width="17" height="17" fill="#000"/>
<rect x="1328.0" y="928.8" width="58.4" height="37.7" fill="url(#cbtn)"/>
<rect x="1386.9" y="928.8" width="55.4" height="37.7" fill="url(#cbtn)"/>
<rect x="1442.8" y="928.8" width="55.7" height="37.7" fill="url(#cbtnd)"/>
<rect x="1500.0" y="928.8" width="55.0" height="37.7" fill="url(#cbtn)"/>
<rect x="1555.6" y="928.8" width="55.2" height="37.7" fill="url(#cbtn)"/>
<line x1="1386.6" y1="928.8" x2="1386.6" y2="966.5" stroke="#333" stroke-width="1.3"/>
<line x1="1442.5" y1="928.8" x2="1442.5" y2="966.5" stroke="#333" stroke-width="1.3"/>
<line x1="1499.7" y1="928.8" x2="1499.7" y2="966.5" stroke="#333" stroke-width="1.3"/>
<line x1="1555.3" y1="928.8" x2="1555.3" y2="966.5" stroke="#333" stroke-width="1.3"/>
<circle cx="1357.3" cy="948.3" r="12.4" fill="url(#icirc)"/>
<circle cx="1414.6" cy="948.3" r="12.4" fill="url(#icirc)"/>
<circle cx="1470.6" cy="948.3" r="12.4" fill="url(#icircd)"/>
<circle cx="1527.5" cy="948.3" r="12.4" fill="url(#icirc)"/>
<circle cx="1583.2" cy="948.3" r="12.4" fill="url(#icirc)"/>
<g transform="translate(0 0.8)">
<rect x="1352.4" y="942.6" width="9.8" height="9.8" fill="#333"/>
<path d="M1410.8 941.8 L1420.5 947.7 L1410.8 953.6 Z" fill="#2a2a2a"/>
<path d="M1466.2 941.6 H1464.3 V953.6 H1466.2 M1474.8 941.6 H1476.8 V953.6 H1474.8" fill="none" stroke="#222" stroke-width="2"/><circle cx="1468.9" cy="947.6" r="0.9" fill="#222"/><circle cx="1472.2" cy="947.6" r="0.9" fill="#222"/>
<path d="M1527.5 947.5 C1524.5 943.5 1520.5 944 1520.5 947.5 C1520.5 951 1524.5 951.5 1527.5 947.5 C1530.5 943.5 1534.5 944 1534.5 947.5 C1534.5 951 1530.5 951.5 1527.5 947.5 Z" fill="none" stroke="#2a2a2a" stroke-width="2.2"/>
<path d="M1577.8 945.2 A6 6 0 0 1 1588.2 944.2 M1588.6 949.8 A6 6 0 0 1 1578.2 950.8" fill="none" stroke="#2a2a2a" stroke-width="2.3"/><path d="M1589.8 940.6 L1590.2 946.2 L1585 945.4 Z" fill="#2a2a2a"/><path d="M1576.4 954.4 L1576 948.8 L1581.2 949.6 Z" fill="#2a2a2a"/>
</g>
<g filter="drop-shadow(1px 1px 1px rgba(0,0,0,0.6))"><rect x="-3.2" y="-16.5" width="6.4" height="33" rx="1" transform="translate(1638.3 946.3) rotate(0)" fill="#e01010"/><rect x="-3.2" y="-16.5" width="6.4" height="33" rx="1" transform="translate(1638.3 946.3) rotate(60)" fill="#e01010"/><rect x="-3.2" y="-16.5" width="6.4" height="33" rx="1" transform="translate(1638.3 946.3) rotate(120)" fill="#e01010"/></g>
<rect x="1328" y="967.8" width="170.5" height="45" rx="3" fill="url(#nbtn)"/>
<rect x="1500" y="967.8" width="170" height="45" rx="3" fill="url(#nbtn)"/>
<line x1="1499.2" y1="967.8" x2="1499.2" y2="1006" stroke="#2a2a2a" stroke-width="1.5"/>
<circle cx="1368.7" cy="987.4" r="12.5" fill="url(#icirc)"/>
<circle cx="1633.5" cy="987.0" r="12.5" fill="url(#icirc)"/>
<path d="M1368.6 982 L1363.6 987.4 L1368.6 992.8 M1373.8 982 L1368.8 987.4 L1373.8 992.8" fill="none" stroke="#333" stroke-width="2"/>
<path d="M1630 982 L1635 987.2 L1630 992.4 M1635.2 982 L1640.2 987.2 L1635.2 992.4" fill="none" stroke="#333" stroke-width="2"/>
<text x="1397.37" y="997.00" font-size="27.91" textLength="65.89" lengthAdjust="spacingAndGlyphs" fill="#333333" stroke="#333" stroke-width="0.9">Back</text>
<text x="1532.90" y="996.40" font-size="27.91" textLength="65.23" lengthAdjust="spacingAndGlyphs" fill="#333333" stroke="#333" stroke-width="0.9">Next</text>
<rect x="1667" y="925" width="3" height="81" fill="#1e1e1e"/>
</svg>
</body></html>
